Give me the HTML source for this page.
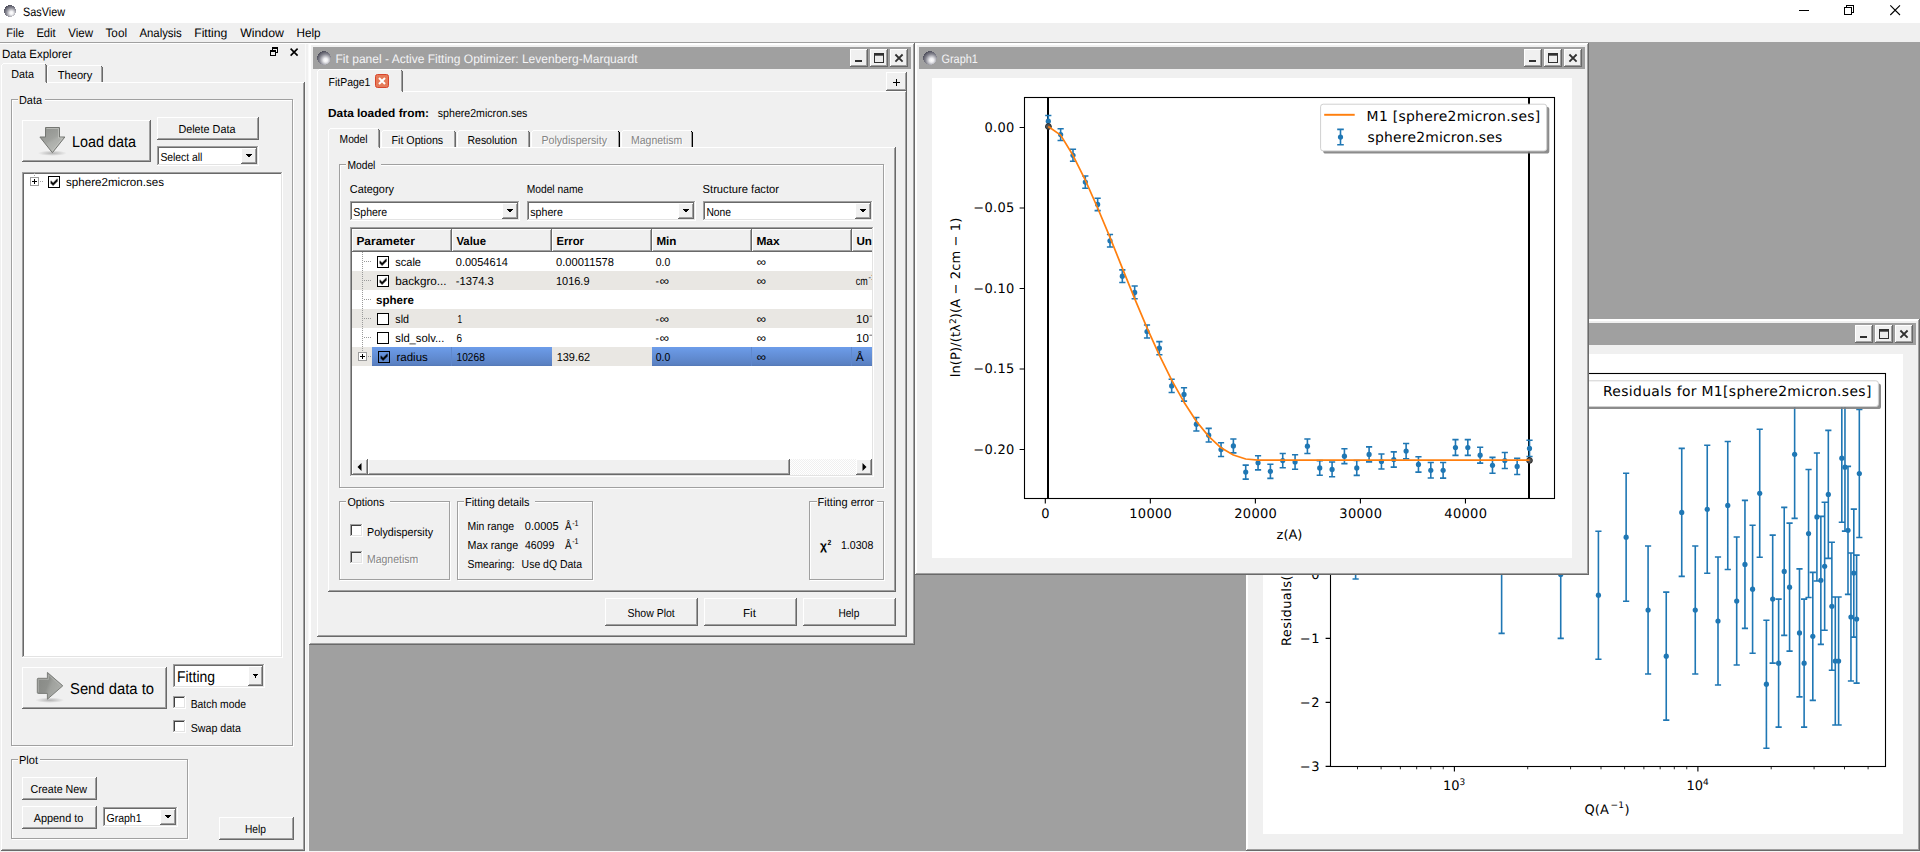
<!DOCTYPE html>
<html lang="en"><head><meta charset="utf-8"><title>SasView</title>
<style>html,body{margin:0;padding:0;background:#a0a0a0;overflow:hidden}body{width:1920px;height:852px}svg{display:block}</style>
</head><body>
<svg width="1920" height="852" viewBox="0 0 1920 852" shape-rendering="crispEdges" font-family="'Liberation Sans', sans-serif" font-size="11.6" text-rendering="geometricPrecision">
<defs>
<radialGradient id="ball" cx="0.62" cy="0.66" r="0.75" fx="0.62" fy="0.66"><stop offset="0" stop-color="#ffffff"/><stop offset="0.18" stop-color="#f4f4f6"/><stop offset="0.55" stop-color="#8f8f99"/><stop offset="1" stop-color="#3a3a48"/></radialGradient>
<radialGradient id="ball2" cx="0.62" cy="0.66" r="0.75" fx="0.62" fy="0.66"><stop offset="0" stop-color="#ffffff"/><stop offset="0.2" stop-color="#efeff2"/><stop offset="0.6" stop-color="#85858f"/><stop offset="1" stop-color="#3c3c4a"/></radialGradient>
<linearGradient id="sel" x1="0" y1="0" x2="0" y2="1"><stop offset="0" stop-color="#6d9dea"/><stop offset="0.9" stop-color="#5a81c3"/><stop offset="1" stop-color="#5478b6"/></linearGradient>
<linearGradient id="arrg" x1="0.2" y1="0" x2="0.8" y2="1"><stop offset="0" stop-color="#90928e"/><stop offset="0.45" stop-color="#a0a29e"/><stop offset="0.55" stop-color="#acaeaa"/><stop offset="1" stop-color="#bdbfbb"/></linearGradient>
<linearGradient id="arrh" x1="0" y1="0.3" x2="1" y2="0.7"><stop offset="0" stop-color="#888a86"/><stop offset="0.4" stop-color="#8f918d"/><stop offset="0.55" stop-color="#a0a29e"/><stop offset="1" stop-color="#aeb0ac"/></linearGradient>
<radialGradient id="shad" cx="0.5" cy="0.5" r="0.5"><stop offset="0" stop-color="#808080" stop-opacity="0.55"/><stop offset="1" stop-color="#808080" stop-opacity="0"/></radialGradient>
<pattern id="dith" width="2" height="2" patternUnits="userSpaceOnUse"><rect width="2" height="2" fill="#ffffff"/><rect width="1" height="1" fill="#f0f0f0"/><rect x="1" y="1" width="1" height="1" fill="#f0f0f0"/></pattern>
</defs>
<rect x="0" y="0" width="1920" height="852" fill="#a0a0a0"/>
<rect x="0" y="0" width="1920" height="23" fill="#ffffff"/>
<circle cx="10" cy="11" r="6" fill="url(#ball)"/>
<text x="23" y="16" font-size="12.2" textLength="42" lengthAdjust="spacingAndGlyphs">SasView</text>
<rect x="1799" y="10" width="10" height="1" fill="#000"/>
<path d="M1844.5 7.5h7v7h-7zM1846.5 7.5v-2h7v7h-2" fill="none" stroke="#000" stroke-width="1"/>
<path d="M1890.3 5.3l9.7 9.7M1900 5.3l-9.7 9.7" stroke="#000" stroke-width="1.1" fill="none" shape-rendering="geometricPrecision"/>
<rect x="0" y="23" width="1920" height="19" fill="#f0f0f0"/>
<rect x="0" y="42" width="1920" height="1" fill="#a0a0a0"/>
<rect x="0" y="43" width="309" height="1" fill="#ffffff"/>
<text x="6.3" y="37" font-size="12.2" textLength="17.8" lengthAdjust="spacingAndGlyphs">File</text>
<text x="36.4" y="37" font-size="12.2" textLength="19.3" lengthAdjust="spacingAndGlyphs">Edit</text>
<text x="68.2" y="37" font-size="12.2" textLength="24.8" lengthAdjust="spacingAndGlyphs">View</text>
<text x="105.5" y="37" font-size="12.2" textLength="21.5" lengthAdjust="spacingAndGlyphs">Tool</text>
<text x="139.4" y="37" font-size="12.2" textLength="42.4" lengthAdjust="spacingAndGlyphs">Analysis</text>
<text x="194.2" y="37" font-size="12.2" textLength="33.2" lengthAdjust="spacingAndGlyphs">Fitting</text>
<text x="240.2" y="37" font-size="12.2" textLength="43.7" lengthAdjust="spacingAndGlyphs">Window</text>
<text x="296.5" y="37" font-size="12.2" textLength="24.1" lengthAdjust="spacingAndGlyphs">Help</text>
<rect x="0" y="44" width="309" height="808" fill="#f0f0f0"/>
<rect x="305" y="851" width="1615" height="1" fill="#f6f6f6"/>
<text x="2" y="58" font-size="12" textLength="70" lengthAdjust="spacingAndGlyphs">Data Explorer</text>
<rect x="272" y="47" width="6" height="6" fill="#000"/>
<rect x="273" y="49" width="4" height="3" fill="#f0f0f0"/>
<rect x="270" y="50" width="6" height="6" fill="#000"/>
<rect x="271" y="52" width="4" height="3" fill="#f0f0f0"/>
<path d="M290.6 48.6l7 7M297.6 48.6l-7 7" stroke="#000" stroke-width="1.6" fill="none" shape-rendering="geometricPrecision"/>
<rect x="47" y="82" width="257" height="1" fill="#ffffff"/>
<rect x="1" y="65" width="1" height="785" fill="#ffffff"/>
<rect x="303" y="83" width="1" height="767" fill="#a0a0a0"/>
<rect x="304" y="82" width="1" height="769" fill="#696969"/>
<rect x="2" y="849" width="302" height="1" fill="#a0a0a0"/>
<rect x="1" y="850" width="304" height="1" fill="#696969"/>
<rect x="305" y="44" width="1" height="808" fill="#f9f9f9"/>
<rect x="308" y="44" width="1" height="808" fill="#f9f9f9"/>
<rect x="3" y="63" width="42" height="1" fill="#ffffff"/>
<rect x="2" y="64" width="1" height="1" fill="#ffffff"/>
<rect x="45" y="65" width="1" height="17" fill="#a0a0a0"/>
<rect x="46" y="65" width="1" height="18" fill="#696969"/>
<rect x="45" y="64" width="1" height="1" fill="#696969"/>
<text x="11.3" y="78" textLength="22.7" lengthAdjust="spacingAndGlyphs">Data</text>
<rect x="49" y="65" width="52" height="1" fill="#ffffff"/>
<rect x="47" y="67" width="1" height="15" fill="#ffffff"/>
<rect x="48" y="66" width="1" height="1" fill="#ffffff"/>
<rect x="101" y="67" width="1" height="15" fill="#a0a0a0"/>
<rect x="102" y="67" width="1" height="15" fill="#696969"/>
<rect x="101" y="66" width="1" height="1" fill="#696969"/>
<text x="57.8" y="79" textLength="34.5" lengthAdjust="spacingAndGlyphs">Theory</text>
<rect x="12" y="100" width="282" height="1" fill="#ffffff"/>
<rect x="12" y="100" width="1" height="647" fill="#ffffff"/>
<rect x="12" y="746" width="282" height="1" fill="#ffffff"/>
<rect x="293" y="100" width="1" height="647" fill="#ffffff"/>
<rect x="11" y="99" width="282" height="1" fill="#a0a0a0"/>
<rect x="11" y="99" width="1" height="647" fill="#a0a0a0"/>
<rect x="11" y="745" width="282" height="1" fill="#a0a0a0"/>
<rect x="292" y="99" width="1" height="647" fill="#a0a0a0"/>
<rect x="18" y="93" width="27" height="14" fill="#f0f0f0"/>
<text x="19" y="103.8" textLength="23" lengthAdjust="spacingAndGlyphs">Data</text>
<rect x="22" y="120" width="129" height="42" fill="#f0f0f0"/>
<rect x="22" y="120" width="128" height="1" fill="#ffffff"/>
<rect x="22" y="120" width="1" height="41" fill="#ffffff"/>
<rect x="22" y="161" width="129" height="1" fill="#696969"/>
<rect x="150" y="120" width="1" height="42" fill="#696969"/>
<rect x="23" y="160" width="127" height="1" fill="#a0a0a0"/>
<rect x="149" y="121" width="1" height="40" fill="#a0a0a0"/>
<ellipse cx="52.3" cy="153.2" rx="14.5" ry="2.7" fill="url(#shad)" shape-rendering="geometricPrecision"/>
<path d="M45.5 127.5H59.5V137H64.9L52.4 152.7L39.9 137H45.5Z" fill="url(#arrg)" stroke="#747672" stroke-width="1" stroke-linejoin="round" shape-rendering="geometricPrecision"/>
<path d="M46.5 128.5H58.5V138H62.6L52.4 150.9" fill="none" stroke="#c4c6c2" stroke-opacity="0.8" stroke-width="0.9" shape-rendering="geometricPrecision"/>
<text x="72" y="146.5" font-size="15.6" textLength="64" lengthAdjust="spacingAndGlyphs">Load data</text>
<rect x="157" y="117" width="102" height="23" fill="#f0f0f0"/>
<rect x="157" y="117" width="101" height="1" fill="#ffffff"/>
<rect x="157" y="117" width="1" height="22" fill="#ffffff"/>
<rect x="157" y="139" width="102" height="1" fill="#696969"/>
<rect x="258" y="117" width="1" height="23" fill="#696969"/>
<rect x="158" y="138" width="100" height="1" fill="#a0a0a0"/>
<rect x="257" y="118" width="1" height="21" fill="#a0a0a0"/>
<text x="178.4" y="132.7" textLength="57" lengthAdjust="spacingAndGlyphs">Delete Data</text>
<rect x="157" y="146" width="102" height="20" fill="#ffffff"/>
<rect x="157" y="146" width="101" height="1" fill="#a0a0a0"/>
<rect x="157" y="146" width="1" height="19" fill="#a0a0a0"/>
<rect x="158" y="147" width="99" height="1" fill="#696969"/>
<rect x="158" y="147" width="1" height="17" fill="#696969"/>
<rect x="157" y="165" width="102" height="1" fill="#ffffff"/>
<rect x="258" y="146" width="1" height="20" fill="#ffffff"/>
<rect x="158" y="164" width="100" height="1" fill="#e3e3e3"/>
<rect x="257" y="147" width="1" height="18" fill="#e3e3e3"/>
<rect x="241" y="148" width="16" height="16" fill="#f0f0f0"/>
<rect x="241" y="148" width="15" height="1" fill="#ffffff"/>
<rect x="241" y="148" width="1" height="15" fill="#ffffff"/>
<rect x="241" y="163" width="16" height="1" fill="#696969"/>
<rect x="256" y="148" width="1" height="16" fill="#696969"/>
<rect x="242" y="162" width="14" height="1" fill="#a0a0a0"/>
<rect x="255" y="149" width="1" height="14" fill="#a0a0a0"/>
<path d="M245.5 153.5h7l-3.5 4z" fill="#000"/>
<text x="160.4" y="160.7" textLength="42" lengthAdjust="spacingAndGlyphs">Select all</text>
<rect x="22" y="172" width="261" height="486" fill="#ffffff"/>
<rect x="22" y="172" width="260" height="1" fill="#a0a0a0"/>
<rect x="22" y="172" width="1" height="485" fill="#a0a0a0"/>
<rect x="23" y="173" width="258" height="1" fill="#696969"/>
<rect x="23" y="173" width="1" height="483" fill="#696969"/>
<rect x="22" y="657" width="261" height="1" fill="#ffffff"/>
<rect x="282" y="172" width="1" height="486" fill="#ffffff"/>
<rect x="23" y="656" width="259" height="1" fill="#e3e3e3"/>
<rect x="281" y="173" width="1" height="484" fill="#e3e3e3"/>
<rect x="30" y="177" width="9" height="9" fill="#9c9c9c"/>
<rect x="31" y="178" width="7" height="7" fill="#ffffff"/>
<rect x="32" y="181" width="5" height="1" fill="#000"/>
<rect x="34" y="179" width="1" height="5" fill="#000"/>
<rect x="40" y="181" width="1" height="1" fill="#a0a0a0"/>
<rect x="42" y="181" width="1" height="1" fill="#a0a0a0"/>
<rect x="34" y="173" width="1" height="1" fill="#a0a0a0"/>
<rect x="34" y="175" width="1" height="1" fill="#a0a0a0"/>
<rect x="48" y="176" width="12" height="12" fill="#000"/>
<rect x="49" y="177" width="10" height="10" fill="#ffffff"/>
<path d="M50.6 180.7h1v3h-1zM51.6 181.7h1v3h-1zM52.6 182.7h1v3h-1zM53.6 181.7h1v3h-1zM54.6 180.7h1v3h-1zM55.6 179.7h1v3h-1zM56.6 178.7h1v3h-1z" fill="#000" shape-rendering="geometricPrecision"/>
<text x="66" y="185.5" textLength="98" lengthAdjust="spacingAndGlyphs">sphere2micron.ses</text>
<rect x="22" y="667" width="145" height="42" fill="#f0f0f0"/>
<rect x="22" y="667" width="144" height="1" fill="#ffffff"/>
<rect x="22" y="667" width="1" height="41" fill="#ffffff"/>
<rect x="22" y="708" width="145" height="1" fill="#696969"/>
<rect x="166" y="667" width="1" height="42" fill="#696969"/>
<rect x="23" y="707" width="143" height="1" fill="#a0a0a0"/>
<rect x="165" y="668" width="1" height="40" fill="#a0a0a0"/>
<ellipse cx="49.7" cy="700.2" rx="14.5" ry="2.7" fill="url(#shad)" shape-rendering="geometricPrecision"/>
<path d="M38.2 678.3H47.4V672.4L62.8 685.8L47.4 699.2V693.4H38.2Q37.3 693.4 37.3 692.4V679.3Q37.3 678.3 38.2 678.3Z" fill="url(#arrh)" stroke="#7c7e7a" stroke-width="1" stroke-linejoin="round" shape-rendering="geometricPrecision"/>
<path d="M38.4 692.3V679.4H48.4V674.8L60.9 685.8" fill="none" stroke="#b9bbb7" stroke-opacity="0.7" stroke-width="0.9" shape-rendering="geometricPrecision"/>
<text x="70" y="693.8" font-size="15.6" textLength="84" lengthAdjust="spacingAndGlyphs">Send data to</text>
<rect x="173" y="664" width="92" height="24" fill="#ffffff"/>
<rect x="173" y="664" width="91" height="1" fill="#a0a0a0"/>
<rect x="173" y="664" width="1" height="23" fill="#a0a0a0"/>
<rect x="174" y="665" width="89" height="1" fill="#696969"/>
<rect x="174" y="665" width="1" height="21" fill="#696969"/>
<rect x="173" y="687" width="92" height="1" fill="#ffffff"/>
<rect x="264" y="664" width="1" height="24" fill="#ffffff"/>
<rect x="174" y="686" width="90" height="1" fill="#e3e3e3"/>
<rect x="263" y="665" width="1" height="22" fill="#e3e3e3"/>
<rect x="248" y="666" width="15" height="20" fill="#f0f0f0"/>
<rect x="248" y="666" width="14" height="1" fill="#ffffff"/>
<rect x="248" y="666" width="1" height="19" fill="#ffffff"/>
<rect x="248" y="685" width="15" height="1" fill="#696969"/>
<rect x="262" y="666" width="1" height="20" fill="#696969"/>
<rect x="249" y="684" width="13" height="1" fill="#a0a0a0"/>
<rect x="261" y="667" width="1" height="18" fill="#a0a0a0"/>
<path d="M252.0 673.5h7l-3.5 4z" fill="#000"/>
<text x="177" y="682" font-size="15.6" textLength="38" lengthAdjust="spacingAndGlyphs">Fitting</text>
<rect x="173" y="696" width="13" height="13" fill="#ffffff"/>
<rect x="173" y="696" width="12" height="1" fill="#a0a0a0"/>
<rect x="173" y="696" width="1" height="12" fill="#a0a0a0"/>
<rect x="174" y="697" width="10" height="1" fill="#696969"/>
<rect x="174" y="697" width="1" height="10" fill="#696969"/>
<rect x="173" y="708" width="13" height="1" fill="#ffffff"/>
<rect x="185" y="696" width="1" height="13" fill="#ffffff"/>
<rect x="174" y="707" width="11" height="1" fill="#e3e3e3"/>
<rect x="184" y="697" width="1" height="11" fill="#e3e3e3"/>
<rect x="174" y="697" width="10" height="1" fill="#404040"/>
<rect x="174" y="697" width="1" height="10" fill="#404040"/>
<text x="190.7" y="707.8" textLength="55.3" lengthAdjust="spacingAndGlyphs">Batch mode</text>
<rect x="173" y="720" width="13" height="13" fill="#ffffff"/>
<rect x="173" y="720" width="12" height="1" fill="#a0a0a0"/>
<rect x="173" y="720" width="1" height="12" fill="#a0a0a0"/>
<rect x="174" y="721" width="10" height="1" fill="#696969"/>
<rect x="174" y="721" width="1" height="10" fill="#696969"/>
<rect x="173" y="732" width="13" height="1" fill="#ffffff"/>
<rect x="185" y="720" width="1" height="13" fill="#ffffff"/>
<rect x="174" y="731" width="11" height="1" fill="#e3e3e3"/>
<rect x="184" y="721" width="1" height="11" fill="#e3e3e3"/>
<rect x="174" y="721" width="10" height="1" fill="#404040"/>
<rect x="174" y="721" width="1" height="10" fill="#404040"/>
<text x="190.7" y="731.8" textLength="50.3" lengthAdjust="spacingAndGlyphs">Swap data</text>
<rect x="12" y="760" width="177" height="1" fill="#ffffff"/>
<rect x="12" y="760" width="1" height="80" fill="#ffffff"/>
<rect x="12" y="839" width="177" height="1" fill="#ffffff"/>
<rect x="188" y="760" width="1" height="80" fill="#ffffff"/>
<rect x="11" y="759" width="177" height="1" fill="#a0a0a0"/>
<rect x="11" y="759" width="1" height="80" fill="#a0a0a0"/>
<rect x="11" y="838" width="177" height="1" fill="#a0a0a0"/>
<rect x="187" y="759" width="1" height="80" fill="#a0a0a0"/>
<rect x="18" y="753" width="22" height="14" fill="#f0f0f0"/>
<text x="19" y="763.8" textLength="19" lengthAdjust="spacingAndGlyphs">Plot</text>
<rect x="22" y="777" width="75" height="23" fill="#f0f0f0"/>
<rect x="22" y="777" width="74" height="1" fill="#ffffff"/>
<rect x="22" y="777" width="1" height="22" fill="#ffffff"/>
<rect x="22" y="799" width="75" height="1" fill="#696969"/>
<rect x="96" y="777" width="1" height="23" fill="#696969"/>
<rect x="23" y="798" width="73" height="1" fill="#a0a0a0"/>
<rect x="95" y="778" width="1" height="21" fill="#a0a0a0"/>
<text x="30.5" y="792.7" textLength="56.5" lengthAdjust="spacingAndGlyphs">Create New</text>
<rect x="22" y="806" width="75" height="23" fill="#f0f0f0"/>
<rect x="22" y="806" width="74" height="1" fill="#ffffff"/>
<rect x="22" y="806" width="1" height="22" fill="#ffffff"/>
<rect x="22" y="828" width="75" height="1" fill="#696969"/>
<rect x="96" y="806" width="1" height="23" fill="#696969"/>
<rect x="23" y="827" width="73" height="1" fill="#a0a0a0"/>
<rect x="95" y="807" width="1" height="21" fill="#a0a0a0"/>
<text x="33.7" y="821.5" textLength="49.6" lengthAdjust="spacingAndGlyphs">Append to</text>
<rect x="103" y="807" width="75" height="20" fill="#ffffff"/>
<rect x="103" y="807" width="74" height="1" fill="#a0a0a0"/>
<rect x="103" y="807" width="1" height="19" fill="#a0a0a0"/>
<rect x="104" y="808" width="72" height="1" fill="#696969"/>
<rect x="104" y="808" width="1" height="17" fill="#696969"/>
<rect x="103" y="826" width="75" height="1" fill="#ffffff"/>
<rect x="177" y="807" width="1" height="20" fill="#ffffff"/>
<rect x="104" y="825" width="73" height="1" fill="#e3e3e3"/>
<rect x="176" y="808" width="1" height="18" fill="#e3e3e3"/>
<rect x="160" y="809" width="16" height="16" fill="#f0f0f0"/>
<rect x="160" y="809" width="15" height="1" fill="#ffffff"/>
<rect x="160" y="809" width="1" height="15" fill="#ffffff"/>
<rect x="160" y="824" width="16" height="1" fill="#696969"/>
<rect x="175" y="809" width="1" height="16" fill="#696969"/>
<rect x="161" y="823" width="14" height="1" fill="#a0a0a0"/>
<rect x="174" y="810" width="1" height="14" fill="#a0a0a0"/>
<path d="M164.5 814.5h7l-3.5 4z" fill="#000"/>
<text x="106.5" y="821.5" textLength="35" lengthAdjust="spacingAndGlyphs">Graph1</text>
<rect x="219" y="817" width="75" height="23" fill="#f0f0f0"/>
<rect x="219" y="817" width="74" height="1" fill="#ffffff"/>
<rect x="219" y="817" width="1" height="22" fill="#ffffff"/>
<rect x="219" y="839" width="75" height="1" fill="#696969"/>
<rect x="293" y="817" width="1" height="23" fill="#696969"/>
<rect x="220" y="838" width="73" height="1" fill="#a0a0a0"/>
<rect x="292" y="818" width="1" height="21" fill="#a0a0a0"/>
<text x="245" y="833" textLength="21" lengthAdjust="spacingAndGlyphs">Help</text>
<rect x="309" y="43" width="606" height="602" fill="#f0f0f0"/>
<rect x="309" y="43" width="605" height="2" fill="#ffffff"/>
<rect x="309" y="43" width="2" height="601" fill="#ffffff"/>
<rect x="309" y="644" width="606" height="1" fill="#696969"/>
<rect x="914" y="43" width="1" height="602" fill="#696969"/>
<rect x="310" y="643" width="604" height="1" fill="#a0a0a0"/>
<rect x="913" y="44" width="1" height="600" fill="#a0a0a0"/>
<rect x="313" y="47" width="598" height="22" fill="#a0a0a0"/>
<circle cx="324" cy="58" r="6.8" fill="url(#ball2)"/>
<text x="335.5" y="63" font-size="12.3" fill="#f4f4f6" textLength="302" lengthAdjust="spacingAndGlyphs">Fit panel - Active Fitting Optimizer: Levenberg-Marquardt</text>
<rect x="850" y="49" width="18" height="18" fill="#f0f0f0"/>
<rect x="850" y="49" width="17" height="1" fill="#ffffff"/>
<rect x="850" y="49" width="1" height="17" fill="#ffffff"/>
<rect x="850" y="66" width="18" height="1" fill="#696969"/>
<rect x="867" y="49" width="1" height="18" fill="#696969"/>
<rect x="851" y="65" width="16" height="1" fill="#a0a0a0"/>
<rect x="866" y="50" width="1" height="16" fill="#a0a0a0"/>
<rect x="870" y="49" width="18" height="18" fill="#f0f0f0"/>
<rect x="870" y="49" width="17" height="1" fill="#ffffff"/>
<rect x="870" y="49" width="1" height="17" fill="#ffffff"/>
<rect x="870" y="66" width="18" height="1" fill="#696969"/>
<rect x="887" y="49" width="1" height="18" fill="#696969"/>
<rect x="871" y="65" width="16" height="1" fill="#a0a0a0"/>
<rect x="886" y="50" width="1" height="16" fill="#a0a0a0"/>
<rect x="890" y="49" width="18" height="18" fill="#f0f0f0"/>
<rect x="890" y="49" width="17" height="1" fill="#ffffff"/>
<rect x="890" y="49" width="1" height="17" fill="#ffffff"/>
<rect x="890" y="66" width="18" height="1" fill="#696969"/>
<rect x="907" y="49" width="1" height="18" fill="#696969"/>
<rect x="891" y="65" width="16" height="1" fill="#a0a0a0"/>
<rect x="906" y="50" width="1" height="16" fill="#a0a0a0"/>
<rect x="855" y="60" width="7" height="2" fill="#303030"/>
<rect x="874" y="53" width="10" height="10" fill="#303030"/>
<rect x="875" y="55" width="8" height="7" fill="#ececec"/>
<rect x="875" y="55" width="8" height="1" fill="#6a6a6a"/>
<path d="M895.4 54.5l7.2 7.2M902.6 54.5l-7.2 7.2" stroke="#303030" stroke-width="1.8" fill="none" shape-rendering="geometricPrecision"/>
<rect x="403" y="91" width="503" height="1" fill="#ffffff"/>
<rect x="317" y="71" width="1" height="565" fill="#ffffff"/>
<rect x="905" y="92" width="1" height="544" fill="#a0a0a0"/>
<rect x="906" y="91" width="1" height="546" fill="#696969"/>
<rect x="318" y="635" width="588" height="1" fill="#a0a0a0"/>
<rect x="317" y="636" width="590" height="1" fill="#696969"/>
<rect x="319" y="69" width="82" height="1" fill="#ffffff"/>
<rect x="318" y="70" width="1" height="1" fill="#ffffff"/>
<rect x="401" y="71" width="1" height="20" fill="#a0a0a0"/>
<rect x="402" y="71" width="1" height="21" fill="#696969"/>
<rect x="401" y="70" width="1" height="1" fill="#696969"/>
<text x="328.6" y="86" textLength="41.8" lengthAdjust="spacingAndGlyphs">FitPage1</text>
<rect x="375.5" y="74.5" width="13" height="13" rx="2" fill="#e57a58" stroke="#d8452c" stroke-width="1" shape-rendering="geometricPrecision"/>
<path d="M379 78l6 6M385 78l-6 6" stroke="#fff" stroke-width="2" fill="none" shape-rendering="geometricPrecision"/>
<rect x="886" y="72" width="21" height="19" fill="#f0f0f0"/>
<rect x="886" y="72" width="20" height="1" fill="#ffffff"/>
<rect x="886" y="72" width="1" height="18" fill="#ffffff"/>
<rect x="886" y="90" width="21" height="1" fill="#696969"/>
<rect x="906" y="72" width="1" height="19" fill="#696969"/>
<rect x="887" y="89" width="19" height="1" fill="#a0a0a0"/>
<rect x="905" y="73" width="1" height="17" fill="#a0a0a0"/>
<rect x="893" y="82" width="7" height="1" fill="#000"/>
<rect x="896" y="79" width="1" height="7" fill="#000"/>
<text x="328" y="116.5" font-weight="bold" textLength="101" lengthAdjust="spacingAndGlyphs">Data loaded from:</text>
<text x="437.8" y="116.5" textLength="89.6" lengthAdjust="spacingAndGlyphs">sphere2micron.ses</text>
<rect x="330" y="128" width="48" height="1" fill="#ffffff"/>
<rect x="329" y="129" width="1" height="1" fill="#ffffff"/>
<rect x="328" y="130" width="1" height="461" fill="#ffffff"/>
<rect x="378" y="130" width="1" height="17" fill="#a0a0a0"/>
<rect x="379" y="130" width="1" height="18" fill="#696969"/>
<rect x="378" y="129" width="1" height="1" fill="#696969"/>
<text x="339.6" y="142.5" textLength="27.9" lengthAdjust="spacingAndGlyphs">Model</text>
<rect x="383" y="130" width="71" height="1" fill="#ffffff"/>
<rect x="381" y="132" width="1" height="15" fill="#ffffff"/>
<rect x="382" y="131" width="1" height="1" fill="#ffffff"/>
<rect x="454" y="132" width="1" height="15" fill="#a0a0a0"/>
<rect x="455" y="132" width="1" height="15" fill="#696969"/>
<rect x="454" y="131" width="1" height="1" fill="#696969"/>
<text x="391.5" y="143.5" textLength="51.7" lengthAdjust="spacingAndGlyphs">Fit Options</text>
<rect x="459" y="130" width="69" height="1" fill="#ffffff"/>
<rect x="457" y="132" width="1" height="15" fill="#ffffff"/>
<rect x="458" y="131" width="1" height="1" fill="#ffffff"/>
<rect x="528" y="132" width="1" height="15" fill="#a0a0a0"/>
<rect x="529" y="132" width="1" height="15" fill="#696969"/>
<rect x="528" y="131" width="1" height="1" fill="#696969"/>
<text x="467.5" y="143.5" textLength="49.5" lengthAdjust="spacingAndGlyphs">Resolution</text>
<rect x="533" y="130" width="85" height="1" fill="#ffffff"/>
<rect x="531" y="132" width="1" height="15" fill="#ffffff"/>
<rect x="532" y="131" width="1" height="1" fill="#ffffff"/>
<rect x="619" y="132" width="1" height="15" fill="#000"/>
<rect x="618" y="131" width="1" height="1" fill="#000"/>
<rect x="618" y="132" width="1" height="15" fill="#9a9a9a"/>
<text x="542.4" y="144.5" fill="#ffffff" textLength="65.6" lengthAdjust="spacingAndGlyphs">Polydispersity</text>
<text x="541.4" y="143.5" fill="#848484" textLength="65.6" lengthAdjust="spacingAndGlyphs">Polydispersity</text>
<rect x="623" y="130" width="68" height="1" fill="#ffffff"/>
<rect x="621" y="132" width="1" height="15" fill="#ffffff"/>
<rect x="622" y="131" width="1" height="1" fill="#ffffff"/>
<rect x="692" y="132" width="1" height="15" fill="#000"/>
<rect x="691" y="131" width="1" height="1" fill="#000"/>
<rect x="691" y="132" width="1" height="15" fill="#9a9a9a"/>
<text x="632" y="144.5" fill="#ffffff" textLength="51.3" lengthAdjust="spacingAndGlyphs">Magnetism</text>
<text x="631" y="143.5" fill="#848484" textLength="51.3" lengthAdjust="spacingAndGlyphs">Magnetism</text>
<rect x="380" y="147" width="515" height="1" fill="#ffffff"/>
<rect x="894" y="148" width="1" height="443" fill="#a0a0a0"/>
<rect x="895" y="147" width="1" height="445" fill="#696969"/>
<rect x="329" y="590" width="566" height="1" fill="#a0a0a0"/>
<rect x="328" y="591" width="568" height="1" fill="#696969"/>
<rect x="340" y="165" width="545" height="1" fill="#ffffff"/>
<rect x="340" y="165" width="1" height="324" fill="#ffffff"/>
<rect x="340" y="488" width="545" height="1" fill="#ffffff"/>
<rect x="884" y="165" width="1" height="324" fill="#ffffff"/>
<rect x="339" y="164" width="545" height="1" fill="#a0a0a0"/>
<rect x="339" y="164" width="1" height="324" fill="#a0a0a0"/>
<rect x="339" y="487" width="545" height="1" fill="#a0a0a0"/>
<rect x="883" y="164" width="1" height="324" fill="#a0a0a0"/>
<rect x="346.4" y="158" width="34.60000000000002" height="14" fill="#f0f0f0"/>
<text x="347.4" y="168.8" textLength="28" lengthAdjust="spacingAndGlyphs">Model</text>
<text x="349.8" y="193" textLength="44.2" lengthAdjust="spacingAndGlyphs">Category</text>
<text x="526.7" y="193" textLength="56.5" lengthAdjust="spacingAndGlyphs">Model name</text>
<text x="702.6" y="193" textLength="76.4" lengthAdjust="spacingAndGlyphs">Structure factor</text>
<rect x="350" y="201" width="170" height="20" fill="#ffffff"/>
<rect x="350" y="201" width="169" height="1" fill="#a0a0a0"/>
<rect x="350" y="201" width="1" height="19" fill="#a0a0a0"/>
<rect x="351" y="202" width="167" height="1" fill="#696969"/>
<rect x="351" y="202" width="1" height="17" fill="#696969"/>
<rect x="350" y="220" width="170" height="1" fill="#ffffff"/>
<rect x="519" y="201" width="1" height="20" fill="#ffffff"/>
<rect x="351" y="219" width="168" height="1" fill="#e3e3e3"/>
<rect x="518" y="202" width="1" height="18" fill="#e3e3e3"/>
<rect x="502" y="203" width="16" height="16" fill="#f0f0f0"/>
<rect x="502" y="203" width="15" height="1" fill="#ffffff"/>
<rect x="502" y="203" width="1" height="15" fill="#ffffff"/>
<rect x="502" y="218" width="16" height="1" fill="#696969"/>
<rect x="517" y="203" width="1" height="16" fill="#696969"/>
<rect x="503" y="217" width="14" height="1" fill="#a0a0a0"/>
<rect x="516" y="204" width="1" height="14" fill="#a0a0a0"/>
<path d="M506.5 208.5h7l-3.5 4z" fill="#000"/>
<text x="353.3" y="215.7" textLength="33.9" lengthAdjust="spacingAndGlyphs">Sphere</text>
<rect x="527" y="201" width="169" height="20" fill="#ffffff"/>
<rect x="527" y="201" width="168" height="1" fill="#a0a0a0"/>
<rect x="527" y="201" width="1" height="19" fill="#a0a0a0"/>
<rect x="528" y="202" width="166" height="1" fill="#696969"/>
<rect x="528" y="202" width="1" height="17" fill="#696969"/>
<rect x="527" y="220" width="169" height="1" fill="#ffffff"/>
<rect x="695" y="201" width="1" height="20" fill="#ffffff"/>
<rect x="528" y="219" width="167" height="1" fill="#e3e3e3"/>
<rect x="694" y="202" width="1" height="18" fill="#e3e3e3"/>
<rect x="678" y="203" width="16" height="16" fill="#f0f0f0"/>
<rect x="678" y="203" width="15" height="1" fill="#ffffff"/>
<rect x="678" y="203" width="1" height="15" fill="#ffffff"/>
<rect x="678" y="218" width="16" height="1" fill="#696969"/>
<rect x="693" y="203" width="1" height="16" fill="#696969"/>
<rect x="679" y="217" width="14" height="1" fill="#a0a0a0"/>
<rect x="692" y="204" width="1" height="14" fill="#a0a0a0"/>
<path d="M682.5 208.5h7l-3.5 4z" fill="#000"/>
<text x="530.3" y="215.7" textLength="32.5" lengthAdjust="spacingAndGlyphs">sphere</text>
<rect x="703" y="201" width="170" height="20" fill="#ffffff"/>
<rect x="703" y="201" width="169" height="1" fill="#a0a0a0"/>
<rect x="703" y="201" width="1" height="19" fill="#a0a0a0"/>
<rect x="704" y="202" width="167" height="1" fill="#696969"/>
<rect x="704" y="202" width="1" height="17" fill="#696969"/>
<rect x="703" y="220" width="170" height="1" fill="#ffffff"/>
<rect x="872" y="201" width="1" height="20" fill="#ffffff"/>
<rect x="704" y="219" width="168" height="1" fill="#e3e3e3"/>
<rect x="871" y="202" width="1" height="18" fill="#e3e3e3"/>
<rect x="855" y="203" width="16" height="16" fill="#f0f0f0"/>
<rect x="855" y="203" width="15" height="1" fill="#ffffff"/>
<rect x="855" y="203" width="1" height="15" fill="#ffffff"/>
<rect x="855" y="218" width="16" height="1" fill="#696969"/>
<rect x="870" y="203" width="1" height="16" fill="#696969"/>
<rect x="856" y="217" width="14" height="1" fill="#a0a0a0"/>
<rect x="869" y="204" width="1" height="14" fill="#a0a0a0"/>
<path d="M859.5 208.5h7l-3.5 4z" fill="#000"/>
<text x="706.4" y="215.7" textLength="24.6" lengthAdjust="spacingAndGlyphs">None</text>
<rect x="350" y="227" width="524" height="250" fill="#ffffff"/>
<rect x="350" y="227" width="523" height="1" fill="#a0a0a0"/>
<rect x="350" y="227" width="1" height="249" fill="#a0a0a0"/>
<rect x="351" y="228" width="521" height="1" fill="#696969"/>
<rect x="351" y="228" width="1" height="247" fill="#696969"/>
<rect x="350" y="476" width="524" height="1" fill="#ffffff"/>
<rect x="873" y="227" width="1" height="250" fill="#ffffff"/>
<rect x="351" y="475" width="522" height="1" fill="#e3e3e3"/>
<rect x="872" y="228" width="1" height="248" fill="#e3e3e3"/>
<clipPath id="tblclip"><rect x="352" y="229" width="520" height="246"/></clipPath>
<g clip-path="url(#tblclip)">
<rect x="352" y="229" width="520" height="23" fill="#f0f0f0"/>
<rect x="352" y="229" width="99" height="1" fill="#ffffff"/>
<rect x="352" y="229" width="1" height="22" fill="#ffffff"/>
<rect x="451" y="229" width="1" height="23" fill="#696969"/>
<rect x="450" y="230" width="1" height="21" fill="#a0a0a0"/>
<rect x="352" y="251" width="100" height="1" fill="#696969"/>
<rect x="353" y="250" width="98" height="1" fill="#a0a0a0"/>
<text x="356.4" y="244.8" font-weight="bold" textLength="58.4" lengthAdjust="spacingAndGlyphs">Parameter</text>
<rect x="452" y="229" width="99" height="1" fill="#ffffff"/>
<rect x="452" y="229" width="1" height="22" fill="#ffffff"/>
<rect x="551" y="229" width="1" height="23" fill="#696969"/>
<rect x="550" y="230" width="1" height="21" fill="#a0a0a0"/>
<rect x="452" y="251" width="100" height="1" fill="#696969"/>
<rect x="453" y="250" width="98" height="1" fill="#a0a0a0"/>
<text x="456.4" y="244.8" font-weight="bold" textLength="29.7" lengthAdjust="spacingAndGlyphs">Value</text>
<rect x="552" y="229" width="99" height="1" fill="#ffffff"/>
<rect x="552" y="229" width="1" height="22" fill="#ffffff"/>
<rect x="651" y="229" width="1" height="23" fill="#696969"/>
<rect x="650" y="230" width="1" height="21" fill="#a0a0a0"/>
<rect x="552" y="251" width="100" height="1" fill="#696969"/>
<rect x="553" y="250" width="98" height="1" fill="#a0a0a0"/>
<text x="556.4" y="244.8" font-weight="bold" textLength="27.5" lengthAdjust="spacingAndGlyphs">Error</text>
<rect x="652" y="229" width="99" height="1" fill="#ffffff"/>
<rect x="652" y="229" width="1" height="22" fill="#ffffff"/>
<rect x="751" y="229" width="1" height="23" fill="#696969"/>
<rect x="750" y="230" width="1" height="21" fill="#a0a0a0"/>
<rect x="652" y="251" width="100" height="1" fill="#696969"/>
<rect x="653" y="250" width="98" height="1" fill="#a0a0a0"/>
<text x="656.4" y="244.8" font-weight="bold" textLength="20" lengthAdjust="spacingAndGlyphs">Min</text>
<rect x="752" y="229" width="99" height="1" fill="#ffffff"/>
<rect x="752" y="229" width="1" height="22" fill="#ffffff"/>
<rect x="851" y="229" width="1" height="23" fill="#696969"/>
<rect x="850" y="230" width="1" height="21" fill="#a0a0a0"/>
<rect x="752" y="251" width="100" height="1" fill="#696969"/>
<rect x="753" y="250" width="98" height="1" fill="#a0a0a0"/>
<text x="756.4" y="244.8" font-weight="bold" textLength="23.3" lengthAdjust="spacingAndGlyphs">Max</text>
<rect x="852" y="229" width="99" height="1" fill="#ffffff"/>
<rect x="852" y="229" width="1" height="22" fill="#ffffff"/>
<rect x="951" y="229" width="1" height="23" fill="#696969"/>
<rect x="950" y="230" width="1" height="21" fill="#a0a0a0"/>
<rect x="852" y="251" width="100" height="1" fill="#696969"/>
<rect x="853" y="250" width="98" height="1" fill="#a0a0a0"/>
<text x="856.4" y="244.8" font-weight="bold" textLength="29" lengthAdjust="spacingAndGlyphs">Units</text>
<rect x="362" y="252" width="1" height="1" fill="#9a9a9a"/>
<rect x="362" y="254" width="1" height="1" fill="#9a9a9a"/>
<rect x="362" y="256" width="1" height="1" fill="#9a9a9a"/>
<rect x="362" y="258" width="1" height="1" fill="#9a9a9a"/>
<rect x="362" y="260" width="1" height="1" fill="#9a9a9a"/>
<rect x="362" y="262" width="1" height="1" fill="#9a9a9a"/>
<rect x="362" y="264" width="1" height="1" fill="#9a9a9a"/>
<rect x="362" y="266" width="1" height="1" fill="#9a9a9a"/>
<rect x="362" y="268" width="1" height="1" fill="#9a9a9a"/>
<rect x="362" y="270" width="1" height="1" fill="#9a9a9a"/>
<rect x="364" y="261" width="1" height="1" fill="#9a9a9a"/>
<rect x="366" y="261" width="1" height="1" fill="#9a9a9a"/>
<rect x="368" y="261" width="1" height="1" fill="#9a9a9a"/>
<rect x="370" y="261" width="1" height="1" fill="#9a9a9a"/>
<rect x="377" y="256" width="12" height="12" fill="#000"/>
<rect x="378" y="257" width="10" height="10" fill="#ffffff"/>
<path d="M379.6 260.7h1v3h-1zM380.6 261.7h1v3h-1zM381.6 262.7h1v3h-1zM382.6 261.7h1v3h-1zM383.6 260.7h1v3h-1zM384.6 259.7h1v3h-1zM385.6 258.7h1v3h-1z" fill="#000" shape-rendering="geometricPrecision"/>
<text x="395.3" y="265.5" textLength="25.7" lengthAdjust="spacingAndGlyphs">scale</text>
<text x="455.8" y="265.5" textLength="52.1" lengthAdjust="spacingAndGlyphs">0.0054614</text>
<text x="556" y="265.5" textLength="58" lengthAdjust="spacingAndGlyphs">0.00011578</text>
<text x="655.8" y="265.5" textLength="14.5" lengthAdjust="spacingAndGlyphs">0.0</text>
<text x="756.6" y="265.8" font-size="12" textLength="9.6" lengthAdjust="spacingAndGlyphs">∞</text>
<rect x="352" y="271" width="520" height="19" fill="#e9e7e3"/>
<rect x="362" y="272" width="1" height="1" fill="#9a9a9a"/>
<rect x="362" y="274" width="1" height="1" fill="#9a9a9a"/>
<rect x="362" y="276" width="1" height="1" fill="#9a9a9a"/>
<rect x="362" y="278" width="1" height="1" fill="#9a9a9a"/>
<rect x="362" y="280" width="1" height="1" fill="#9a9a9a"/>
<rect x="362" y="282" width="1" height="1" fill="#9a9a9a"/>
<rect x="362" y="284" width="1" height="1" fill="#9a9a9a"/>
<rect x="362" y="286" width="1" height="1" fill="#9a9a9a"/>
<rect x="362" y="288" width="1" height="1" fill="#9a9a9a"/>
<rect x="364" y="280" width="1" height="1" fill="#9a9a9a"/>
<rect x="366" y="280" width="1" height="1" fill="#9a9a9a"/>
<rect x="368" y="280" width="1" height="1" fill="#9a9a9a"/>
<rect x="370" y="280" width="1" height="1" fill="#9a9a9a"/>
<rect x="377" y="275" width="12" height="12" fill="#000"/>
<rect x="378" y="276" width="10" height="10" fill="#ffffff"/>
<path d="M379.6 279.7h1v3h-1zM380.6 280.7h1v3h-1zM381.6 281.7h1v3h-1zM382.6 280.7h1v3h-1zM383.6 279.7h1v3h-1zM384.6 278.7h1v3h-1zM385.6 277.7h1v3h-1z" fill="#000" shape-rendering="geometricPrecision"/>
<text x="395.3" y="284.5" textLength="51.2" lengthAdjust="spacingAndGlyphs">backgro...</text>
<text x="455.8" y="284.5" textLength="37.9" lengthAdjust="spacingAndGlyphs">-1374.3</text>
<text x="556" y="284.5" textLength="33.5" lengthAdjust="spacingAndGlyphs">1016.9</text>
<text x="655.5" y="284.5" textLength="3.5" lengthAdjust="spacingAndGlyphs">-</text>
<text x="659.6" y="284.8" font-size="12" textLength="9.6" lengthAdjust="spacingAndGlyphs">∞</text>
<text x="756.6" y="284.8" font-size="12" textLength="9.6" lengthAdjust="spacingAndGlyphs">∞</text>
<text x="855.8" y="284.5" textLength="12" lengthAdjust="spacingAndGlyphs">cm</text>
<text x="868.6" y="280.2" font-size="8.2" textLength="6.4" lengthAdjust="spacingAndGlyphs">-1</text>
<rect x="362" y="290" width="1" height="1" fill="#9a9a9a"/>
<rect x="362" y="292" width="1" height="1" fill="#9a9a9a"/>
<rect x="362" y="294" width="1" height="1" fill="#9a9a9a"/>
<rect x="362" y="296" width="1" height="1" fill="#9a9a9a"/>
<rect x="362" y="298" width="1" height="1" fill="#9a9a9a"/>
<rect x="362" y="300" width="1" height="1" fill="#9a9a9a"/>
<rect x="362" y="302" width="1" height="1" fill="#9a9a9a"/>
<rect x="362" y="304" width="1" height="1" fill="#9a9a9a"/>
<rect x="362" y="306" width="1" height="1" fill="#9a9a9a"/>
<rect x="362" y="308" width="1" height="1" fill="#9a9a9a"/>
<rect x="364" y="299" width="1" height="1" fill="#9a9a9a"/>
<rect x="366" y="299" width="1" height="1" fill="#9a9a9a"/>
<rect x="368" y="299" width="1" height="1" fill="#9a9a9a"/>
<rect x="370" y="299" width="1" height="1" fill="#9a9a9a"/>
<text x="376" y="303.5" font-weight="bold" textLength="37.9" lengthAdjust="spacingAndGlyphs">sphere</text>
<rect x="352" y="309" width="520" height="19" fill="#e9e7e3"/>
<rect x="362" y="310" width="1" height="1" fill="#9a9a9a"/>
<rect x="362" y="312" width="1" height="1" fill="#9a9a9a"/>
<rect x="362" y="314" width="1" height="1" fill="#9a9a9a"/>
<rect x="362" y="316" width="1" height="1" fill="#9a9a9a"/>
<rect x="362" y="318" width="1" height="1" fill="#9a9a9a"/>
<rect x="362" y="320" width="1" height="1" fill="#9a9a9a"/>
<rect x="362" y="322" width="1" height="1" fill="#9a9a9a"/>
<rect x="362" y="324" width="1" height="1" fill="#9a9a9a"/>
<rect x="362" y="326" width="1" height="1" fill="#9a9a9a"/>
<rect x="364" y="318" width="1" height="1" fill="#9a9a9a"/>
<rect x="366" y="318" width="1" height="1" fill="#9a9a9a"/>
<rect x="368" y="318" width="1" height="1" fill="#9a9a9a"/>
<rect x="370" y="318" width="1" height="1" fill="#9a9a9a"/>
<rect x="377" y="313" width="12" height="12" fill="#000"/>
<rect x="378" y="314" width="10" height="10" fill="#ffffff"/>
<text x="395.3" y="322.5" textLength="13.7" lengthAdjust="spacingAndGlyphs">sld</text>
<text x="457.40000000000003" y="322.5" textLength="4.6" lengthAdjust="spacingAndGlyphs">1</text>
<text x="655.5" y="322.5" textLength="3.5" lengthAdjust="spacingAndGlyphs">-</text>
<text x="659.6" y="322.8" font-size="12" textLength="9.6" lengthAdjust="spacingAndGlyphs">∞</text>
<text x="756.6" y="322.8" font-size="12" textLength="9.6" lengthAdjust="spacingAndGlyphs">∞</text>
<text x="856" y="322.5">10⁻⁶/Å²</text>
<rect x="362" y="328" width="1" height="1" fill="#9a9a9a"/>
<rect x="362" y="330" width="1" height="1" fill="#9a9a9a"/>
<rect x="362" y="332" width="1" height="1" fill="#9a9a9a"/>
<rect x="362" y="334" width="1" height="1" fill="#9a9a9a"/>
<rect x="362" y="336" width="1" height="1" fill="#9a9a9a"/>
<rect x="362" y="338" width="1" height="1" fill="#9a9a9a"/>
<rect x="362" y="340" width="1" height="1" fill="#9a9a9a"/>
<rect x="362" y="342" width="1" height="1" fill="#9a9a9a"/>
<rect x="362" y="344" width="1" height="1" fill="#9a9a9a"/>
<rect x="362" y="346" width="1" height="1" fill="#9a9a9a"/>
<rect x="364" y="337" width="1" height="1" fill="#9a9a9a"/>
<rect x="366" y="337" width="1" height="1" fill="#9a9a9a"/>
<rect x="368" y="337" width="1" height="1" fill="#9a9a9a"/>
<rect x="370" y="337" width="1" height="1" fill="#9a9a9a"/>
<rect x="377" y="332" width="12" height="12" fill="#000"/>
<rect x="378" y="333" width="10" height="10" fill="#ffffff"/>
<text x="395.3" y="341.5" textLength="49" lengthAdjust="spacingAndGlyphs">sld_solv...</text>
<text x="456.40000000000003" y="341.5" textLength="5.5" lengthAdjust="spacingAndGlyphs">6</text>
<text x="655.5" y="341.5" textLength="3.5" lengthAdjust="spacingAndGlyphs">-</text>
<text x="659.6" y="341.8" font-size="12" textLength="9.6" lengthAdjust="spacingAndGlyphs">∞</text>
<text x="756.6" y="341.8" font-size="12" textLength="9.6" lengthAdjust="spacingAndGlyphs">∞</text>
<text x="856" y="341.5">10⁻⁶/Å²</text>
<rect x="352" y="347" width="520" height="19" fill="#e9e7e3"/>
<rect x="362" y="348" width="1" height="1" fill="#9a9a9a"/>
<rect x="362" y="350" width="1" height="1" fill="#9a9a9a"/>
<rect x="362" y="352" width="1" height="1" fill="#9a9a9a"/>
<rect x="362" y="354" width="1" height="1" fill="#9a9a9a"/>
<rect x="362" y="356" width="1" height="1" fill="#9a9a9a"/>
<rect x="364" y="356" width="1" height="1" fill="#9a9a9a"/>
<rect x="366" y="356" width="1" height="1" fill="#9a9a9a"/>
<rect x="368" y="356" width="1" height="1" fill="#9a9a9a"/>
<rect x="370" y="356" width="1" height="1" fill="#9a9a9a"/>
<rect x="372" y="347" width="80" height="19" fill="url(#sel)"/>
<rect x="452" y="347" width="100" height="19" fill="url(#sel)"/>
<rect x="652" y="347" width="100" height="19" fill="url(#sel)"/>
<rect x="752" y="347" width="100" height="19" fill="url(#sel)"/>
<rect x="852" y="347" width="20" height="19" fill="url(#sel)"/>
<rect x="451" y="347" width="1" height="19" fill="#5f88cc"/>
<rect x="751" y="347" width="1" height="19" fill="#5f88cc"/>
<rect x="851" y="347" width="1" height="19" fill="#5f88cc"/>
<rect x="358" y="352" width="9" height="9" fill="#9c9c9c"/>
<rect x="359" y="353" width="7" height="7" fill="#ffffff"/>
<rect x="360" y="356" width="5" height="1" fill="#000"/>
<rect x="362" y="354" width="1" height="5" fill="#000"/>
<rect x="378" y="351" width="12" height="1" fill="#000"/>
<rect x="378" y="362" width="12" height="1" fill="#000"/>
<rect x="378" y="351" width="1" height="12" fill="#000"/>
<rect x="389" y="351" width="1" height="12" fill="#000"/>
<path d="M380.6 355.7h1v3h-1zM381.6 356.7h1v3h-1zM382.6 357.7h1v3h-1zM383.6 356.7h1v3h-1zM384.6 355.7h1v3h-1zM385.6 354.7h1v3h-1zM386.6 353.7h1v3h-1z" fill="#000" shape-rendering="geometricPrecision"/>
<text x="396.5" y="360.5" textLength="31.3" lengthAdjust="spacingAndGlyphs">radius</text>
<text x="456.6" y="360.5" textLength="28.2" lengthAdjust="spacingAndGlyphs">10268</text>
<text x="556.7" y="360.5" textLength="33.5" lengthAdjust="spacingAndGlyphs">139.62</text>
<text x="655.8" y="360.5" textLength="14.5" lengthAdjust="spacingAndGlyphs">0.0</text>
<text x="756.6" y="360.8" font-size="12" textLength="9.6" lengthAdjust="spacingAndGlyphs">∞</text>
<text x="856" y="360.5">Å</text>
<rect x="352" y="459" width="520" height="16" fill="url(#dith)"/>
<rect x="352" y="459" width="16" height="16" fill="#f0f0f0"/>
<rect x="352" y="459" width="15" height="1" fill="#ffffff"/>
<rect x="352" y="459" width="1" height="15" fill="#ffffff"/>
<rect x="352" y="474" width="16" height="1" fill="#696969"/>
<rect x="367" y="459" width="1" height="16" fill="#696969"/>
<rect x="353" y="473" width="14" height="1" fill="#a0a0a0"/>
<rect x="366" y="460" width="1" height="14" fill="#a0a0a0"/>
<rect x="856" y="459" width="16" height="16" fill="#f0f0f0"/>
<rect x="856" y="459" width="15" height="1" fill="#ffffff"/>
<rect x="856" y="459" width="1" height="15" fill="#ffffff"/>
<rect x="856" y="474" width="16" height="1" fill="#696969"/>
<rect x="871" y="459" width="1" height="16" fill="#696969"/>
<rect x="857" y="473" width="14" height="1" fill="#a0a0a0"/>
<rect x="870" y="460" width="1" height="14" fill="#a0a0a0"/>
<rect x="368" y="459" width="422" height="16" fill="#f0f0f0"/>
<rect x="368" y="459" width="421" height="1" fill="#ffffff"/>
<rect x="368" y="459" width="1" height="15" fill="#ffffff"/>
<rect x="368" y="474" width="422" height="1" fill="#696969"/>
<rect x="789" y="459" width="1" height="16" fill="#696969"/>
<rect x="369" y="473" width="420" height="1" fill="#a0a0a0"/>
<rect x="788" y="460" width="1" height="14" fill="#a0a0a0"/>
<path d="M357.5 467l4-4v8zM866.5 467l-4-4v8z" fill="#000" shape-rendering="geometricPrecision"/>
</g>
<rect x="340" y="502" width="111" height="1" fill="#ffffff"/>
<rect x="340" y="502" width="1" height="79" fill="#ffffff"/>
<rect x="340" y="580" width="111" height="1" fill="#ffffff"/>
<rect x="450" y="502" width="1" height="79" fill="#ffffff"/>
<rect x="339" y="501" width="111" height="1" fill="#a0a0a0"/>
<rect x="339" y="501" width="1" height="79" fill="#a0a0a0"/>
<rect x="339" y="579" width="111" height="1" fill="#a0a0a0"/>
<rect x="449" y="501" width="1" height="79" fill="#a0a0a0"/>
<rect x="346.4" y="495" width="43.60000000000002" height="14" fill="#f0f0f0"/>
<text x="347.4" y="505.7" textLength="37" lengthAdjust="spacingAndGlyphs">Options</text>
<rect x="350" y="524" width="13" height="13" fill="#ffffff"/>
<rect x="350" y="524" width="12" height="1" fill="#a0a0a0"/>
<rect x="350" y="524" width="1" height="12" fill="#a0a0a0"/>
<rect x="351" y="525" width="10" height="1" fill="#696969"/>
<rect x="351" y="525" width="1" height="10" fill="#696969"/>
<rect x="350" y="536" width="13" height="1" fill="#ffffff"/>
<rect x="362" y="524" width="1" height="13" fill="#ffffff"/>
<rect x="351" y="535" width="11" height="1" fill="#e3e3e3"/>
<rect x="361" y="525" width="1" height="11" fill="#e3e3e3"/>
<rect x="351" y="525" width="10" height="1" fill="#404040"/>
<rect x="351" y="525" width="1" height="10" fill="#404040"/>
<text x="367" y="536" textLength="66" lengthAdjust="spacingAndGlyphs">Polydispersity</text>
<rect x="350" y="551" width="13" height="13" fill="#f0f0f0"/>
<rect x="350" y="551" width="12" height="1" fill="#a0a0a0"/>
<rect x="350" y="551" width="1" height="12" fill="#a0a0a0"/>
<rect x="351" y="552" width="10" height="1" fill="#696969"/>
<rect x="351" y="552" width="1" height="10" fill="#696969"/>
<rect x="350" y="563" width="13" height="1" fill="#ffffff"/>
<rect x="362" y="551" width="1" height="13" fill="#ffffff"/>
<rect x="351" y="562" width="11" height="1" fill="#e3e3e3"/>
<rect x="361" y="552" width="1" height="11" fill="#e3e3e3"/>
<rect x="351" y="552" width="10" height="1" fill="#404040"/>
<rect x="351" y="552" width="1" height="10" fill="#404040"/>
<text x="368" y="563.7" fill="#ffffff" textLength="51.2" lengthAdjust="spacingAndGlyphs">Magnetism</text>
<text x="367" y="562.7" fill="#848484" textLength="51.2" lengthAdjust="spacingAndGlyphs">Magnetism</text>
<rect x="458" y="502" width="136" height="1" fill="#ffffff"/>
<rect x="458" y="502" width="1" height="79" fill="#ffffff"/>
<rect x="458" y="580" width="136" height="1" fill="#ffffff"/>
<rect x="593" y="502" width="1" height="79" fill="#ffffff"/>
<rect x="457" y="501" width="136" height="1" fill="#a0a0a0"/>
<rect x="457" y="501" width="1" height="79" fill="#a0a0a0"/>
<rect x="457" y="579" width="136" height="1" fill="#a0a0a0"/>
<rect x="592" y="501" width="1" height="79" fill="#a0a0a0"/>
<rect x="464" y="495" width="71" height="14" fill="#f0f0f0"/>
<text x="465" y="505.7" textLength="64.5" lengthAdjust="spacingAndGlyphs">Fitting details</text>
<text x="467.6" y="529.8" textLength="46.4" lengthAdjust="spacingAndGlyphs">Min range</text>
<text x="524.8" y="529.8" textLength="33.8" lengthAdjust="spacingAndGlyphs">0.0005</text>
<text x="467.6" y="548.7" textLength="50.6" lengthAdjust="spacingAndGlyphs">Max range</text>
<text x="525" y="548.7" textLength="29.3" lengthAdjust="spacingAndGlyphs">46099</text>
<text x="564.9" y="529.8" textLength="6.6" lengthAdjust="spacingAndGlyphs">Å</text>
<text x="572.2" y="525.5" font-size="8.2" textLength="6.4" lengthAdjust="spacingAndGlyphs">-1</text>
<text x="564.9" y="548.7" textLength="6.6" lengthAdjust="spacingAndGlyphs">Å</text>
<text x="572.2" y="544.4000000000001" font-size="8.2" textLength="6.4" lengthAdjust="spacingAndGlyphs">-1</text>
<text x="467.6" y="567.5" textLength="47.1" lengthAdjust="spacingAndGlyphs">Smearing:</text>
<text x="521.6" y="567.5" textLength="60.5" lengthAdjust="spacingAndGlyphs">Use dQ Data</text>
<rect x="810" y="502" width="75" height="1" fill="#ffffff"/>
<rect x="810" y="502" width="1" height="79" fill="#ffffff"/>
<rect x="810" y="580" width="75" height="1" fill="#ffffff"/>
<rect x="884" y="502" width="1" height="79" fill="#ffffff"/>
<rect x="809" y="501" width="75" height="1" fill="#a0a0a0"/>
<rect x="809" y="501" width="1" height="79" fill="#a0a0a0"/>
<rect x="809" y="579" width="75" height="1" fill="#a0a0a0"/>
<rect x="883" y="501" width="1" height="79" fill="#a0a0a0"/>
<rect x="816.6" y="495" width="60.39999999999998" height="14" fill="#f0f0f0"/>
<text x="817.6" y="505.7" textLength="56.4" lengthAdjust="spacingAndGlyphs">Fitting error</text>
<text x="820" y="550.3" font-size="12.5" font-weight="bold" textLength="7" lengthAdjust="spacingAndGlyphs">χ</text>
<text x="827.5" y="545" font-size="7.5" font-weight="bold" textLength="3.8" lengthAdjust="spacingAndGlyphs">2</text>
<text x="841" y="548.7" textLength="32.3" lengthAdjust="spacingAndGlyphs">1.0308</text>
<rect x="605" y="598" width="93" height="28" fill="#f0f0f0"/>
<rect x="605" y="598" width="92" height="1" fill="#ffffff"/>
<rect x="605" y="598" width="1" height="27" fill="#ffffff"/>
<rect x="605" y="625" width="93" height="1" fill="#696969"/>
<rect x="697" y="598" width="1" height="28" fill="#696969"/>
<rect x="606" y="624" width="91" height="1" fill="#a0a0a0"/>
<rect x="696" y="599" width="1" height="26" fill="#a0a0a0"/>
<text x="627.5" y="616.8" textLength="47.2" lengthAdjust="spacingAndGlyphs">Show Plot</text>
<rect x="704" y="598" width="93" height="28" fill="#f0f0f0"/>
<rect x="704" y="598" width="92" height="1" fill="#ffffff"/>
<rect x="704" y="598" width="1" height="27" fill="#ffffff"/>
<rect x="704" y="625" width="93" height="1" fill="#696969"/>
<rect x="796" y="598" width="1" height="28" fill="#696969"/>
<rect x="705" y="624" width="91" height="1" fill="#a0a0a0"/>
<rect x="795" y="599" width="1" height="26" fill="#a0a0a0"/>
<text x="743" y="616.8" textLength="12.9" lengthAdjust="spacingAndGlyphs">Fit</text>
<rect x="803" y="598" width="93" height="28" fill="#f0f0f0"/>
<rect x="803" y="598" width="92" height="1" fill="#ffffff"/>
<rect x="803" y="598" width="1" height="27" fill="#ffffff"/>
<rect x="803" y="625" width="93" height="1" fill="#696969"/>
<rect x="895" y="598" width="1" height="28" fill="#696969"/>
<rect x="804" y="624" width="91" height="1" fill="#a0a0a0"/>
<rect x="894" y="599" width="1" height="26" fill="#a0a0a0"/>
<text x="838.4" y="616.8" textLength="20.9" lengthAdjust="spacingAndGlyphs">Help</text>
<rect x="1246" y="319" width="674" height="532" fill="#f0f0f0"/>
<rect x="1246" y="319" width="673" height="2" fill="#ffffff"/>
<rect x="1246" y="319" width="2" height="531" fill="#ffffff"/>
<rect x="1246" y="850" width="674" height="1" fill="#696969"/>
<rect x="1919" y="319" width="1" height="532" fill="#696969"/>
<rect x="1247" y="849" width="672" height="1" fill="#a0a0a0"/>
<rect x="1918" y="320" width="1" height="530" fill="#a0a0a0"/>
<rect x="1250" y="323" width="666" height="22" fill="#a0a0a0"/>
<circle cx="1261" cy="334" r="6.8" fill="url(#ball2)"/>
<text x="1272.5" y="339" font-size="12.3" fill="#f4f4f6" textLength="36.3" lengthAdjust="spacingAndGlyphs">Graph2</text>
<rect x="1855" y="325" width="18" height="18" fill="#f0f0f0"/>
<rect x="1855" y="325" width="17" height="1" fill="#ffffff"/>
<rect x="1855" y="325" width="1" height="17" fill="#ffffff"/>
<rect x="1855" y="342" width="18" height="1" fill="#696969"/>
<rect x="1872" y="325" width="1" height="18" fill="#696969"/>
<rect x="1856" y="341" width="16" height="1" fill="#a0a0a0"/>
<rect x="1871" y="326" width="1" height="16" fill="#a0a0a0"/>
<rect x="1875" y="325" width="18" height="18" fill="#f0f0f0"/>
<rect x="1875" y="325" width="17" height="1" fill="#ffffff"/>
<rect x="1875" y="325" width="1" height="17" fill="#ffffff"/>
<rect x="1875" y="342" width="18" height="1" fill="#696969"/>
<rect x="1892" y="325" width="1" height="18" fill="#696969"/>
<rect x="1876" y="341" width="16" height="1" fill="#a0a0a0"/>
<rect x="1891" y="326" width="1" height="16" fill="#a0a0a0"/>
<rect x="1895" y="325" width="18" height="18" fill="#f0f0f0"/>
<rect x="1895" y="325" width="17" height="1" fill="#ffffff"/>
<rect x="1895" y="325" width="1" height="17" fill="#ffffff"/>
<rect x="1895" y="342" width="18" height="1" fill="#696969"/>
<rect x="1912" y="325" width="1" height="18" fill="#696969"/>
<rect x="1896" y="341" width="16" height="1" fill="#a0a0a0"/>
<rect x="1911" y="326" width="1" height="16" fill="#a0a0a0"/>
<rect x="1860" y="336" width="7" height="2" fill="#303030"/>
<rect x="1879" y="329" width="10" height="10" fill="#303030"/>
<rect x="1880" y="331" width="8" height="7" fill="#ececec"/>
<rect x="1880" y="331" width="8" height="1" fill="#6a6a6a"/>
<path d="M1900.4 330.5l7.2 7.2M1907.6 330.5l-7.2 7.2" stroke="#303030" stroke-width="1.8" fill="none" shape-rendering="geometricPrecision"/>
<rect x="1263" y="354" width="640" height="480" fill="#ffffff"/>
<clipPath id="rclip"><rect x="1330.5" y="373.5" width="555.0" height="393.0"/></clipPath>
<g clip-path="url(#rclip)">
<path d="M1355.63 451.02V579.02M1352.53 451.02h6.2M1352.53 579.02h6.2M1501.63 505.42V633.42M1498.53 505.42h6.2M1498.53 633.42h6.2M1560.72 510.40V638.40M1557.62 510.40h6.2M1557.62 638.40h6.2M1598.41 531.22V659.22M1595.31 531.22h6.2M1595.31 659.22h6.2M1626.13 473.18V601.18M1623.03 473.18h6.2M1623.03 601.18h6.2M1648.08 546.03V674.03M1644.98 546.03h6.2M1644.98 674.03h6.2M1666.24 592.13V720.13M1663.14 592.13h6.2M1663.14 720.13h6.2M1681.74 448.40V576.40M1678.64 448.40h6.2M1678.64 576.40h6.2M1695.26 546.03V674.03M1692.16 546.03h6.2M1692.16 674.03h6.2M1707.24 445.27V573.27M1704.14 445.27h6.2M1704.14 573.27h6.2M1718.00 557.01V685.01M1714.90 557.01h6.2M1714.90 685.01h6.2M1727.76 441.44V569.44M1724.66 441.44h6.2M1724.66 569.44h6.2M1736.70 537.03V665.03M1733.60 537.03h6.2M1733.60 665.03h6.2M1744.95 500.38V628.38M1741.85 500.38h6.2M1741.85 628.38h6.2M1752.59 525.21V653.21M1749.49 525.21h6.2M1749.49 653.21h6.2M1759.72 429.31V557.31M1756.62 429.31h6.2M1756.62 557.31h6.2M1766.40 620.22V748.22M1763.30 620.22h6.2M1763.30 748.22h6.2M1772.69 535.11V663.11M1769.59 535.11h6.2M1769.59 663.11h6.2M1778.62 599.15V727.15M1775.52 599.15h6.2M1775.52 727.15h6.2M1784.23 507.40V635.40M1781.13 507.40h6.2M1781.13 635.40h6.2M1789.57 523.17V651.17M1786.47 523.17h6.2M1786.47 651.17h6.2M1794.64 390.36V518.36M1791.54 390.36h6.2M1791.54 518.36h6.2M1799.49 568.89V696.89M1796.39 568.89h6.2M1796.39 696.89h6.2M1804.12 599.15V727.15M1801.02 599.15h6.2M1801.02 727.15h6.2M1808.55 469.54V597.54M1805.45 469.54h6.2M1805.45 597.54h6.2M1812.81 572.33V700.33M1809.71 572.33h6.2M1809.71 700.33h6.2M1816.91 452.93V580.93M1813.81 452.93h6.2M1813.81 580.93h6.2M1820.85 516.34V644.34M1817.75 516.34h6.2M1817.75 644.34h6.2M1824.65 502.23V630.23M1821.55 502.23h6.2M1821.55 630.23h6.2M1828.32 430.40V558.40M1825.22 430.40h6.2M1825.22 558.40h6.2M1831.86 542.32V670.32M1828.76 542.32h6.2M1828.76 670.32h6.2M1835.29 597.04V725.04M1832.19 597.04h6.2M1832.19 725.04h6.2M1838.61 597.04V725.04M1835.51 597.04h6.2M1835.51 725.04h6.2M1841.83 394.19V522.19M1838.73 394.19h6.2M1838.73 522.19h6.2M1844.96 403.13V531.13M1841.86 403.13h6.2M1841.86 531.13h6.2M1847.99 466.34V594.34M1844.89 466.34h6.2M1844.89 594.34h6.2M1850.95 552.99V680.99M1847.85 552.99h6.2M1847.85 680.99h6.2M1853.82 509.12V637.12M1850.72 509.12h6.2M1850.72 637.12h6.2M1856.61 555.10V683.10M1853.51 555.10h6.2M1853.51 683.10h6.2M1859.33 409.52V537.52M1856.23 409.52h6.2M1856.23 537.52h6.2" stroke="#1f77b4" stroke-width="1.6" fill="none" shape-rendering="geometricPrecision"/>
<circle cx="1355.63" cy="515.02" r="2.6" fill="#1f77b4" shape-rendering="geometricPrecision"/>
<circle cx="1501.63" cy="569.42" r="2.6" fill="#1f77b4" shape-rendering="geometricPrecision"/>
<circle cx="1560.72" cy="574.40" r="2.6" fill="#1f77b4" shape-rendering="geometricPrecision"/>
<circle cx="1598.41" cy="595.22" r="2.6" fill="#1f77b4" shape-rendering="geometricPrecision"/>
<circle cx="1626.13" cy="537.18" r="2.6" fill="#1f77b4" shape-rendering="geometricPrecision"/>
<circle cx="1648.08" cy="610.03" r="2.6" fill="#1f77b4" shape-rendering="geometricPrecision"/>
<circle cx="1666.24" cy="656.13" r="2.6" fill="#1f77b4" shape-rendering="geometricPrecision"/>
<circle cx="1681.74" cy="512.40" r="2.6" fill="#1f77b4" shape-rendering="geometricPrecision"/>
<circle cx="1695.26" cy="610.03" r="2.6" fill="#1f77b4" shape-rendering="geometricPrecision"/>
<circle cx="1707.24" cy="509.27" r="2.6" fill="#1f77b4" shape-rendering="geometricPrecision"/>
<circle cx="1718.00" cy="621.01" r="2.6" fill="#1f77b4" shape-rendering="geometricPrecision"/>
<circle cx="1727.76" cy="505.44" r="2.6" fill="#1f77b4" shape-rendering="geometricPrecision"/>
<circle cx="1736.70" cy="601.03" r="2.6" fill="#1f77b4" shape-rendering="geometricPrecision"/>
<circle cx="1744.95" cy="564.38" r="2.6" fill="#1f77b4" shape-rendering="geometricPrecision"/>
<circle cx="1752.59" cy="589.21" r="2.6" fill="#1f77b4" shape-rendering="geometricPrecision"/>
<circle cx="1759.72" cy="493.31" r="2.6" fill="#1f77b4" shape-rendering="geometricPrecision"/>
<circle cx="1766.40" cy="684.22" r="2.6" fill="#1f77b4" shape-rendering="geometricPrecision"/>
<circle cx="1772.69" cy="599.11" r="2.6" fill="#1f77b4" shape-rendering="geometricPrecision"/>
<circle cx="1778.62" cy="663.15" r="2.6" fill="#1f77b4" shape-rendering="geometricPrecision"/>
<circle cx="1784.23" cy="571.40" r="2.6" fill="#1f77b4" shape-rendering="geometricPrecision"/>
<circle cx="1789.57" cy="587.17" r="2.6" fill="#1f77b4" shape-rendering="geometricPrecision"/>
<circle cx="1794.64" cy="454.36" r="2.6" fill="#1f77b4" shape-rendering="geometricPrecision"/>
<circle cx="1799.49" cy="632.89" r="2.6" fill="#1f77b4" shape-rendering="geometricPrecision"/>
<circle cx="1804.12" cy="663.15" r="2.6" fill="#1f77b4" shape-rendering="geometricPrecision"/>
<circle cx="1808.55" cy="533.54" r="2.6" fill="#1f77b4" shape-rendering="geometricPrecision"/>
<circle cx="1812.81" cy="636.33" r="2.6" fill="#1f77b4" shape-rendering="geometricPrecision"/>
<circle cx="1816.91" cy="516.93" r="2.6" fill="#1f77b4" shape-rendering="geometricPrecision"/>
<circle cx="1820.85" cy="580.34" r="2.6" fill="#1f77b4" shape-rendering="geometricPrecision"/>
<circle cx="1824.65" cy="566.23" r="2.6" fill="#1f77b4" shape-rendering="geometricPrecision"/>
<circle cx="1828.32" cy="494.40" r="2.6" fill="#1f77b4" shape-rendering="geometricPrecision"/>
<circle cx="1831.86" cy="606.32" r="2.6" fill="#1f77b4" shape-rendering="geometricPrecision"/>
<circle cx="1835.29" cy="661.04" r="2.6" fill="#1f77b4" shape-rendering="geometricPrecision"/>
<circle cx="1838.61" cy="661.04" r="2.6" fill="#1f77b4" shape-rendering="geometricPrecision"/>
<circle cx="1841.83" cy="458.19" r="2.6" fill="#1f77b4" shape-rendering="geometricPrecision"/>
<circle cx="1844.96" cy="467.13" r="2.6" fill="#1f77b4" shape-rendering="geometricPrecision"/>
<circle cx="1847.99" cy="530.34" r="2.6" fill="#1f77b4" shape-rendering="geometricPrecision"/>
<circle cx="1850.95" cy="616.99" r="2.6" fill="#1f77b4" shape-rendering="geometricPrecision"/>
<circle cx="1853.82" cy="573.12" r="2.6" fill="#1f77b4" shape-rendering="geometricPrecision"/>
<circle cx="1856.61" cy="619.10" r="2.6" fill="#1f77b4" shape-rendering="geometricPrecision"/>
<circle cx="1859.33" cy="473.52" r="2.6" fill="#1f77b4" shape-rendering="geometricPrecision"/>
</g>
<rect x="1559.6" y="383.40000000000003" width="321.4000000000001" height="25.69999999999999" rx="2.6" fill="#808080" fill-opacity="0.9" shape-rendering="geometricPrecision"/>
<rect x="1557" y="380.8" width="321.4000000000001" height="25.69999999999999" rx="2.6" fill="#fff" stroke="#d0d0d0" stroke-width="1" shape-rendering="geometricPrecision"/>
<text x="1603" y="395.9" font-size="13.9" font-family="'DejaVu Sans', 'Liberation Sans', sans-serif" textLength="268.3" lengthAdjust="spacing">Residuals for M1[sphere2micron.ses]</text>
<rect x="1330.5" y="373.5" width="555.0" height="393.0" fill="none" stroke="#000" stroke-width="1.1" shape-rendering="geometricPrecision"/>
<path d="M1330.5 766.40h-4.9M1330.5 702.40h-4.9M1330.5 638.40h-4.9M1330.5 574.40h-4.9M1330.5 510.40h-4.9M1330.5 446.40h-4.9M1330.5 382.40h-4.9M1454.40 766.5v4.9M1697.90 766.5v4.9" stroke="#000" stroke-width="1.1" fill="none" shape-rendering="geometricPrecision"/>
<path d="M1357.50 766.5v2.8M1381.10 766.5v2.8M1400.38 766.5v2.8M1416.68 766.5v2.8M1430.80 766.5v2.8M1443.26 766.5v2.8M1527.70 766.5v2.8M1570.58 766.5v2.8M1601.00 766.5v2.8M1624.60 766.5v2.8M1643.88 766.5v2.8M1660.18 766.5v2.8M1674.30 766.5v2.8M1686.76 766.5v2.8M1771.20 766.5v2.8M1814.08 766.5v2.8M1844.50 766.5v2.8M1868.10 766.5v2.8" stroke="#000" stroke-width="0.85" fill="none" shape-rendering="geometricPrecision"/>
<text x="1319.6" y="770.8" font-size="13.0" font-family="'DejaVu Sans', 'Liberation Sans', sans-serif" text-anchor="end" textLength="19.74" lengthAdjust="spacing">−3</text>
<text x="1319.6" y="706.8" font-size="13.0" font-family="'DejaVu Sans', 'Liberation Sans', sans-serif" text-anchor="end" textLength="19.74" lengthAdjust="spacing">−2</text>
<text x="1319.6" y="642.8" font-size="13.0" font-family="'DejaVu Sans', 'Liberation Sans', sans-serif" text-anchor="end" textLength="19.74" lengthAdjust="spacing">−1</text>
<text x="1319.6" y="578.8" font-size="13.0" font-family="'DejaVu Sans', 'Liberation Sans', sans-serif" text-anchor="end" textLength="8.52" lengthAdjust="spacing">0</text>
<text x="1319.6" y="514.8" font-size="13.0" font-family="'DejaVu Sans', 'Liberation Sans', sans-serif" text-anchor="end" textLength="8.52" lengthAdjust="spacing">1</text>
<text x="1319.6" y="450.79999999999995" font-size="13.0" font-family="'DejaVu Sans', 'Liberation Sans', sans-serif" text-anchor="end" textLength="8.52" lengthAdjust="spacing">2</text>
<text x="1319.6" y="386.79999999999995" font-size="13.0" font-family="'DejaVu Sans', 'Liberation Sans', sans-serif" text-anchor="end" textLength="8.52" lengthAdjust="spacing">3</text>
<text x="1442.9" y="790" font-size="13.0" font-family="'DejaVu Sans', 'Liberation Sans', sans-serif">10</text>
<text x="1459.4" y="784.5" font-size="9" font-family="'DejaVu Sans', 'Liberation Sans', sans-serif">3</text>
<text x="1686.4" y="790" font-size="13.0" font-family="'DejaVu Sans', 'Liberation Sans', sans-serif">10</text>
<text x="1702.9" y="784.5" font-size="9" font-family="'DejaVu Sans', 'Liberation Sans', sans-serif">4</text>
<text x="1584.6" y="813.8" font-size="13.0" font-family="'DejaVu Sans', 'Liberation Sans', sans-serif">Q(A</text>
<text x="1610.6" y="808" font-size="9.1" font-family="'DejaVu Sans', 'Liberation Sans', sans-serif">−1</text>
<text x="1624.6" y="813.8" font-size="13.0" font-family="'DejaVu Sans', 'Liberation Sans', sans-serif">)</text>
<g transform="translate(1290.5 569.75) rotate(-90)">
<text x="0" y="0" font-size="13.0" font-family="'DejaVu Sans', 'Liberation Sans', sans-serif" text-anchor="middle" textLength="152.6" lengthAdjust="spacing">Residuals(normalized)</text>
</g>
<rect x="915" y="43" width="674" height="532" fill="#f0f0f0"/>
<rect x="915" y="43" width="673" height="2" fill="#ffffff"/>
<rect x="915" y="43" width="2" height="531" fill="#ffffff"/>
<rect x="915" y="574" width="674" height="1" fill="#696969"/>
<rect x="1588" y="43" width="1" height="532" fill="#696969"/>
<rect x="916" y="573" width="672" height="1" fill="#a0a0a0"/>
<rect x="1587" y="44" width="1" height="530" fill="#a0a0a0"/>
<rect x="919" y="47" width="666" height="22" fill="#a0a0a0"/>
<circle cx="930" cy="58" r="6.8" fill="url(#ball2)"/>
<text x="941.5" y="63" font-size="12.3" fill="#f4f4f6" textLength="36.3" lengthAdjust="spacingAndGlyphs">Graph1</text>
<rect x="1524" y="49" width="18" height="18" fill="#f0f0f0"/>
<rect x="1524" y="49" width="17" height="1" fill="#ffffff"/>
<rect x="1524" y="49" width="1" height="17" fill="#ffffff"/>
<rect x="1524" y="66" width="18" height="1" fill="#696969"/>
<rect x="1541" y="49" width="1" height="18" fill="#696969"/>
<rect x="1525" y="65" width="16" height="1" fill="#a0a0a0"/>
<rect x="1540" y="50" width="1" height="16" fill="#a0a0a0"/>
<rect x="1544" y="49" width="18" height="18" fill="#f0f0f0"/>
<rect x="1544" y="49" width="17" height="1" fill="#ffffff"/>
<rect x="1544" y="49" width="1" height="17" fill="#ffffff"/>
<rect x="1544" y="66" width="18" height="1" fill="#696969"/>
<rect x="1561" y="49" width="1" height="18" fill="#696969"/>
<rect x="1545" y="65" width="16" height="1" fill="#a0a0a0"/>
<rect x="1560" y="50" width="1" height="16" fill="#a0a0a0"/>
<rect x="1564" y="49" width="18" height="18" fill="#f0f0f0"/>
<rect x="1564" y="49" width="17" height="1" fill="#ffffff"/>
<rect x="1564" y="49" width="1" height="17" fill="#ffffff"/>
<rect x="1564" y="66" width="18" height="1" fill="#696969"/>
<rect x="1581" y="49" width="1" height="18" fill="#696969"/>
<rect x="1565" y="65" width="16" height="1" fill="#a0a0a0"/>
<rect x="1580" y="50" width="1" height="16" fill="#a0a0a0"/>
<rect x="1529" y="60" width="7" height="2" fill="#303030"/>
<rect x="1548" y="53" width="10" height="10" fill="#303030"/>
<rect x="1549" y="55" width="8" height="7" fill="#ececec"/>
<rect x="1549" y="55" width="8" height="1" fill="#6a6a6a"/>
<path d="M1569.4 54.5l7.2 7.2M1576.6 54.5l-7.2 7.2" stroke="#303030" stroke-width="1.8" fill="none" shape-rendering="geometricPrecision"/>
<rect x="932" y="78" width="640" height="480" fill="#ffffff"/>
<rect x="1047" y="98" width="2" height="401" fill="#000"/>
<rect x="1528" y="98" width="2" height="401" fill="#000"/>
<path d="M1048.30 115.50V126.90M1045.20 115.50h6.2M1045.20 126.90h6.2M1060.64 128.72V140.48M1057.54 128.72h6.2M1057.54 140.48h6.2M1072.98 149.30V161.30M1069.88 149.30h6.2M1069.88 161.30h6.2M1085.32 176.00V188.20M1082.22 176.00h6.2M1082.22 188.20h6.2M1097.65 198.21V210.59M1094.55 198.21h6.2M1094.55 210.59h6.2M1109.99 234.53V247.07M1106.89 234.53h6.2M1106.89 247.07h6.2M1122.33 269.85V282.55M1119.23 269.85h6.2M1119.23 282.55h6.2M1134.67 285.98V298.82M1131.57 285.98h6.2M1131.57 298.82h6.2M1147.01 325.01V337.99M1143.91 325.01h6.2M1143.91 337.99h6.2M1159.35 341.64V354.76M1156.25 341.64h6.2M1156.25 354.76h6.2M1171.68 379.27V392.53M1168.58 379.27h6.2M1168.58 392.53h6.2M1184.02 387.71V401.09M1180.92 387.71h6.2M1180.92 401.09h6.2M1196.36 417.45V430.95M1193.26 417.45h6.2M1193.26 430.95h6.2M1208.70 428.39V442.01M1205.60 428.39h6.2M1205.60 442.01h6.2M1221.04 442.73V456.47M1217.94 442.73h6.2M1217.94 456.47h6.2M1233.38 438.97V452.83M1230.28 438.97h6.2M1230.28 452.83h6.2M1245.72 465.11V479.09M1242.62 465.11h6.2M1242.62 479.09h6.2M1258.05 455.76V469.84M1254.95 455.76h6.2M1254.95 469.84h6.2M1270.39 464.20V478.40M1267.29 464.20h6.2M1267.29 478.40h6.2M1282.73 453.45V467.75M1279.63 453.45h6.2M1279.63 467.75h6.2M1295.07 454.80V469.20M1291.97 454.80h6.2M1291.97 469.20h6.2M1307.41 438.94V453.46M1304.31 438.94h6.2M1304.31 453.46h6.2M1319.75 460.59V475.21M1316.65 460.59h6.2M1316.65 475.21h6.2M1332.08 462.04V476.76M1328.98 462.04h6.2M1328.98 476.76h6.2M1344.42 448.79V463.61M1341.32 448.79h6.2M1341.32 463.61h6.2M1356.76 460.44V475.36M1353.66 460.44h6.2M1353.66 475.36h6.2M1369.10 446.89V461.91M1366.00 446.89h6.2M1366.00 461.91h6.2M1381.44 453.94V469.06M1378.34 453.94h6.2M1378.34 469.06h6.2M1393.78 451.90V467.10M1390.68 451.90h6.2M1390.68 467.10h6.2M1406.12 443.45V458.75M1403.02 443.45h6.2M1403.02 458.75h6.2M1418.45 456.70V472.10M1415.35 456.70h6.2M1415.35 472.10h6.2M1430.79 462.56V478.04M1427.69 462.56h6.2M1427.69 478.04h6.2M1443.13 462.51V478.09M1440.03 462.51h6.2M1440.03 478.09h6.2M1455.47 439.66V455.34M1452.37 439.66h6.2M1452.37 455.34h6.2M1467.81 439.62V455.38M1464.71 439.62h6.2M1464.71 455.38h6.2M1480.15 447.28V463.12M1477.05 447.28h6.2M1477.05 463.12h6.2M1492.48 457.33V473.27M1489.38 457.33h6.2M1489.38 473.27h6.2M1504.82 452.49V468.51M1501.72 452.49h6.2M1501.72 468.51h6.2M1517.16 458.34V474.46M1514.06 458.34h6.2M1514.06 474.46h6.2M1529.50 440.30V456.50M1526.40 440.30h6.2M1526.40 456.50h6.2" stroke="#1f77b4" stroke-width="1.6" fill="none" shape-rendering="geometricPrecision"/>
<circle cx="1048.30" cy="121.20" r="2.6" fill="#1f77b4" shape-rendering="geometricPrecision"/>
<circle cx="1060.64" cy="134.60" r="2.6" fill="#1f77b4" shape-rendering="geometricPrecision"/>
<circle cx="1072.98" cy="155.30" r="2.6" fill="#1f77b4" shape-rendering="geometricPrecision"/>
<circle cx="1085.32" cy="182.10" r="2.6" fill="#1f77b4" shape-rendering="geometricPrecision"/>
<circle cx="1097.65" cy="204.40" r="2.6" fill="#1f77b4" shape-rendering="geometricPrecision"/>
<circle cx="1109.99" cy="240.80" r="2.6" fill="#1f77b4" shape-rendering="geometricPrecision"/>
<circle cx="1122.33" cy="276.20" r="2.6" fill="#1f77b4" shape-rendering="geometricPrecision"/>
<circle cx="1134.67" cy="292.40" r="2.6" fill="#1f77b4" shape-rendering="geometricPrecision"/>
<circle cx="1147.01" cy="331.50" r="2.6" fill="#1f77b4" shape-rendering="geometricPrecision"/>
<circle cx="1159.35" cy="348.20" r="2.6" fill="#1f77b4" shape-rendering="geometricPrecision"/>
<circle cx="1171.68" cy="385.90" r="2.6" fill="#1f77b4" shape-rendering="geometricPrecision"/>
<circle cx="1184.02" cy="394.40" r="2.6" fill="#1f77b4" shape-rendering="geometricPrecision"/>
<circle cx="1196.36" cy="424.20" r="2.6" fill="#1f77b4" shape-rendering="geometricPrecision"/>
<circle cx="1208.70" cy="435.20" r="2.6" fill="#1f77b4" shape-rendering="geometricPrecision"/>
<circle cx="1221.04" cy="449.60" r="2.6" fill="#1f77b4" shape-rendering="geometricPrecision"/>
<circle cx="1233.38" cy="445.90" r="2.6" fill="#1f77b4" shape-rendering="geometricPrecision"/>
<circle cx="1245.72" cy="472.10" r="2.6" fill="#1f77b4" shape-rendering="geometricPrecision"/>
<circle cx="1258.05" cy="462.80" r="2.6" fill="#1f77b4" shape-rendering="geometricPrecision"/>
<circle cx="1270.39" cy="471.30" r="2.6" fill="#1f77b4" shape-rendering="geometricPrecision"/>
<circle cx="1282.73" cy="460.60" r="2.6" fill="#1f77b4" shape-rendering="geometricPrecision"/>
<circle cx="1295.07" cy="462.00" r="2.6" fill="#1f77b4" shape-rendering="geometricPrecision"/>
<circle cx="1307.41" cy="446.20" r="2.6" fill="#1f77b4" shape-rendering="geometricPrecision"/>
<circle cx="1319.75" cy="467.90" r="2.6" fill="#1f77b4" shape-rendering="geometricPrecision"/>
<circle cx="1332.08" cy="469.40" r="2.6" fill="#1f77b4" shape-rendering="geometricPrecision"/>
<circle cx="1344.42" cy="456.20" r="2.6" fill="#1f77b4" shape-rendering="geometricPrecision"/>
<circle cx="1356.76" cy="467.90" r="2.6" fill="#1f77b4" shape-rendering="geometricPrecision"/>
<circle cx="1369.10" cy="454.40" r="2.6" fill="#1f77b4" shape-rendering="geometricPrecision"/>
<circle cx="1381.44" cy="461.50" r="2.6" fill="#1f77b4" shape-rendering="geometricPrecision"/>
<circle cx="1393.78" cy="459.50" r="2.6" fill="#1f77b4" shape-rendering="geometricPrecision"/>
<circle cx="1406.12" cy="451.10" r="2.6" fill="#1f77b4" shape-rendering="geometricPrecision"/>
<circle cx="1418.45" cy="464.40" r="2.6" fill="#1f77b4" shape-rendering="geometricPrecision"/>
<circle cx="1430.79" cy="470.30" r="2.6" fill="#1f77b4" shape-rendering="geometricPrecision"/>
<circle cx="1443.13" cy="470.30" r="2.6" fill="#1f77b4" shape-rendering="geometricPrecision"/>
<circle cx="1455.47" cy="447.50" r="2.6" fill="#1f77b4" shape-rendering="geometricPrecision"/>
<circle cx="1467.81" cy="447.50" r="2.6" fill="#1f77b4" shape-rendering="geometricPrecision"/>
<circle cx="1480.15" cy="455.20" r="2.6" fill="#1f77b4" shape-rendering="geometricPrecision"/>
<circle cx="1492.48" cy="465.30" r="2.6" fill="#1f77b4" shape-rendering="geometricPrecision"/>
<circle cx="1504.82" cy="460.50" r="2.6" fill="#1f77b4" shape-rendering="geometricPrecision"/>
<circle cx="1517.16" cy="466.40" r="2.6" fill="#1f77b4" shape-rendering="geometricPrecision"/>
<circle cx="1529.50" cy="448.40" r="2.6" fill="#1f77b4" shape-rendering="geometricPrecision"/>
<circle cx="1048.4" cy="126.5" r="2.9" fill="#555" stroke="#222" stroke-width="0.9" shape-rendering="geometricPrecision"/>
<circle cx="1529.5" cy="460.4" r="2.9" fill="#555" stroke="#222" stroke-width="0.9" shape-rendering="geometricPrecision"/>
<path d="M1048.30 126.50L1060.64 135.10L1072.98 155.30L1085.32 180.10L1097.65 208.00L1109.99 237.30L1122.33 268.10L1134.67 298.60L1147.01 327.90L1159.35 355.10L1171.68 380.20L1184.02 402.20L1196.36 421.20L1208.70 436.40L1221.04 447.80L1233.38 455.00L1245.72 459.00L1258.05 460.10L1270.39 460.20L1282.73 460.20L1295.07 460.20L1307.41 460.20L1319.75 460.20L1332.08 460.20L1344.42 460.20L1356.76 460.20L1369.10 460.20L1381.44 460.20L1393.78 460.20L1406.12 460.20L1418.45 460.20L1430.79 460.20L1443.13 460.20L1455.47 460.20L1467.81 460.20L1480.15 460.20L1492.48 460.20L1504.82 460.20L1517.16 460.20L1529.50 460.20" stroke="#ff7f0e" stroke-width="1.7" fill="none" stroke-linejoin="round" shape-rendering="geometricPrecision"/>
<rect x="1323.1999999999998" y="106.8" width="226.10000000000014" height="46.7" rx="2.6" fill="#808080" fill-opacity="0.9" shape-rendering="geometricPrecision"/>
<rect x="1320.6" y="104.2" width="226.10000000000014" height="46.7" rx="2.6" fill="#fff" stroke="#d0d0d0" stroke-width="1" shape-rendering="geometricPrecision"/>
<path d="M1324.2 114.8H1354.7" stroke="#ff7f0e" stroke-width="1.95" shape-rendering="geometricPrecision"/>
<text x="1366.6" y="120.9" font-size="13.9" font-family="'DejaVu Sans', 'Liberation Sans', sans-serif" textLength="173.6" lengthAdjust="spacing">M1 [sphere2micron.ses]</text>
<path d="M1340.50 129.40V144.80M1337.20 129.40h6.6M1337.20 144.80h6.6" stroke="#1f77b4" stroke-width="1.6" fill="none" shape-rendering="geometricPrecision"/>
<circle cx="1340.50" cy="137.10" r="2.6" fill="#1f77b4" shape-rendering="geometricPrecision"/>
<text x="1367.5" y="141.5" font-size="13.9" font-family="'DejaVu Sans', 'Liberation Sans', sans-serif" textLength="134.8" lengthAdjust="spacing">sphere2micron.ses</text>
<rect x="1024.5" y="97.5" width="530.0" height="401.0" fill="none" stroke="#000" stroke-width="1.1" shape-rendering="geometricPrecision"/>
<path d="M1024.5 127.50h-4.9M1045.30 498.5v4.9M1024.5 208.00h-4.9M1150.34 498.5v4.9M1024.5 288.50h-4.9M1255.38 498.5v4.9M1024.5 369.00h-4.9M1360.42 498.5v4.9M1024.5 449.50h-4.9M1465.46 498.5v4.9" stroke="#000" stroke-width="1.1" fill="none" shape-rendering="geometricPrecision"/>
<text x="1014.3" y="131.9" font-size="13.0" font-family="'DejaVu Sans', 'Liberation Sans', sans-serif" text-anchor="end" textLength="29.87" lengthAdjust="spacing">0.00</text>
<text x="1014.3" y="212.4" font-size="13.0" font-family="'DejaVu Sans', 'Liberation Sans', sans-serif" text-anchor="end" textLength="41.11" lengthAdjust="spacing">−0.05</text>
<text x="1014.3" y="292.9" font-size="13.0" font-family="'DejaVu Sans', 'Liberation Sans', sans-serif" text-anchor="end" textLength="41.11" lengthAdjust="spacing">−0.10</text>
<text x="1014.3" y="373.4" font-size="13.0" font-family="'DejaVu Sans', 'Liberation Sans', sans-serif" text-anchor="end" textLength="41.11" lengthAdjust="spacing">−0.15</text>
<text x="1014.3" y="453.9" font-size="13.0" font-family="'DejaVu Sans', 'Liberation Sans', sans-serif" text-anchor="end" textLength="41.11" lengthAdjust="spacing">−0.20</text>
<text x="1045.5" y="517.7" font-size="13.0" font-family="'DejaVu Sans', 'Liberation Sans', sans-serif" text-anchor="middle" textLength="8.52" lengthAdjust="spacing">0</text>
<text x="1150.54" y="517.7" font-size="13.0" font-family="'DejaVu Sans', 'Liberation Sans', sans-serif" text-anchor="middle" textLength="42.6" lengthAdjust="spacing">10000</text>
<text x="1255.58" y="517.7" font-size="13.0" font-family="'DejaVu Sans', 'Liberation Sans', sans-serif" text-anchor="middle" textLength="42.6" lengthAdjust="spacing">20000</text>
<text x="1360.6200000000001" y="517.7" font-size="13.0" font-family="'DejaVu Sans', 'Liberation Sans', sans-serif" text-anchor="middle" textLength="42.6" lengthAdjust="spacing">30000</text>
<text x="1465.66" y="517.7" font-size="13.0" font-family="'DejaVu Sans', 'Liberation Sans', sans-serif" text-anchor="middle" textLength="42.6" lengthAdjust="spacing">40000</text>
<text x="1289.5" y="538.8" font-size="13.0" font-family="'DejaVu Sans', 'Liberation Sans', sans-serif" text-anchor="middle">z(A)</text>
<g transform="translate(960.3 297.5) rotate(-90)">
<text x="0" y="0" font-size="13" font-family="'DejaVu Sans', 'Liberation Sans', sans-serif" text-anchor="middle" textLength="159.7" lengthAdjust="spacing">ln(P)/(tλ<tspan dy="-4.8" font-size="9">2</tspan><tspan dy="4.8">)(A − 2cm − 1)</tspan></text>
</g>
</svg>
</body></html>
